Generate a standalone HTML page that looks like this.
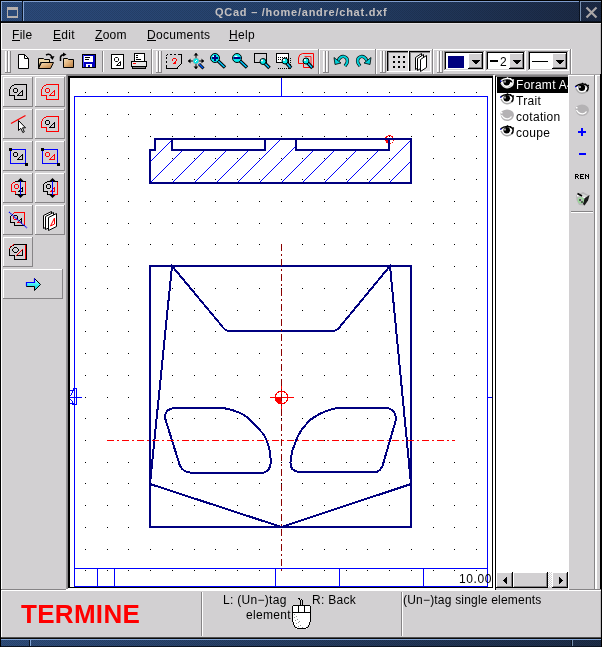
<!DOCTYPE html>
<html><head><meta charset="utf-8">
<style>
html,body{margin:0;padding:0;width:602px;height:647px;overflow:hidden;background:#d2d0d2;}
body{position:relative;font-family:"Liberation Sans",sans-serif;}
svg{position:absolute;left:0;top:0;}
.t{position:absolute;white-space:nowrap;line-height:12px;font-size:12px;color:#000;letter-spacing:0.3px;will-change:transform;}
.m{top:29px;}
.u{position:absolute;height:1px;background:#000;}
</style></head><body>
<svg width="602" height="647" viewBox="0 0 602 647" shape-rendering="crispEdges">
<rect x="0" y="0" width="602" height="647" fill="#d2d0d2" />
<rect x="0" y="0" width="602" height="1" fill="#000000" />
<rect x="0" y="0" width="1" height="647" fill="#000000" />
<rect x="601" y="0" width="1" height="647" fill="#000000" />
<defs><linearGradient id="tg" x1="0" x2="1" y1="0" y2="0"><stop offset="0" stop-color="#2c4b7c"/><stop offset="0.5" stop-color="#25416b"/><stop offset="1" stop-color="#1b2944"/></linearGradient><pattern id="dith" width="2" height="2" patternUnits="userSpaceOnUse"><rect width="1" height="1" fill="#000" fill-opacity="0.12"/><rect x="1" y="1" width="1" height="1" fill="#000" fill-opacity="0.12"/></pattern><linearGradient id="tbg" x1="0" x2="1" y1="0" y2="0"><stop offset="0" stop-color="#2e4d7c"/><stop offset="1" stop-color="#1d2d48"/></linearGradient></defs>
<rect x="1" y="1" width="600" height="21" fill="url(#tg)" />
<rect x="1" y="1" width="600" height="21" fill="url(#dith)" />
<rect x="1" y="1" width="21" height="1" fill="#86a6d6" />
<rect x="1" y="1" width="1" height="20" fill="#86a6d6" />
<rect x="22" y="1" width="1" height="21" fill="#0c1626" />
<rect x="23" y="2" width="1" height="19" fill="#86a6d6" />
<rect x="23" y="1" width="556" height="1" fill="#7e9ccc" />
<rect x="579" y="1" width="1" height="21" fill="#0a1220" />
<rect x="580" y="2" width="1" height="19" fill="#7890b0" />
<rect x="580" y="1" width="21" height="1" fill="#7890b0" />
<rect x="1" y="21" width="600" height="1" fill="#0a1220" />
<rect x="1" y="22" width="600" height="1" fill="#0a0a0a" />
<rect x="7" y="7" width="11" height="11" fill="#b4aeac" />
<rect x="8" y="10" width="9" height="6" fill="#2c4a78" />
<path d="M586.5 7.5 L596.5 17.5 M596.5 7.5 L586.5 17.5" stroke="#aaa6a6" stroke-width="2.2" shape-rendering="auto"/>
<rect x="1" y="23" width="600" height="1" fill="#e4e2e4" />
<rect x="1" y="23" width="1" height="26" fill="#ffffff" />
<rect x="1" y="49" width="571" height="1" fill="#ffffff" />
<rect x="1" y="74" width="600" height="1" fill="#a4a2a4" />
<rect x="5" y="51" width="1" height="22" fill="#ffffff" />
<rect x="6" y="51" width="1" height="22" fill="#e6e4e6" />
<rect x="7" y="51" width="1" height="22" fill="#868486" />
<rect x="8" y="51" width="1" height="22" fill="#ffffff" />
<rect x="9" y="51" width="1" height="22" fill="#e6e4e6" />
<rect x="10" y="51" width="1" height="22" fill="#868486" />
<rect x="5" y="72" width="3" height="1" fill="#868486" />
<rect x="8" y="72" width="3" height="1" fill="#868486" />
<rect x="102" y="51" width="1" height="21" fill="#868486" />
<rect x="103" y="51" width="1" height="21" fill="#ffffff" />
<rect x="151" y="49" width="1" height="25" fill="#868486" />
<rect x="152" y="49" width="1" height="25" fill="#ffffff" />
<rect x="156" y="51" width="1" height="22" fill="#ffffff" />
<rect x="157" y="51" width="1" height="22" fill="#e6e4e6" />
<rect x="158" y="51" width="1" height="22" fill="#868486" />
<rect x="159" y="51" width="1" height="22" fill="#ffffff" />
<rect x="160" y="51" width="1" height="22" fill="#e6e4e6" />
<rect x="161" y="51" width="1" height="22" fill="#868486" />
<rect x="156" y="72" width="3" height="1" fill="#868486" />
<rect x="159" y="72" width="3" height="1" fill="#868486" />
<rect x="318" y="49" width="1" height="25" fill="#868486" />
<rect x="319" y="49" width="1" height="25" fill="#ffffff" />
<rect x="323" y="51" width="1" height="22" fill="#ffffff" />
<rect x="324" y="51" width="1" height="22" fill="#e6e4e6" />
<rect x="325" y="51" width="1" height="22" fill="#868486" />
<rect x="326" y="51" width="1" height="22" fill="#ffffff" />
<rect x="327" y="51" width="1" height="22" fill="#e6e4e6" />
<rect x="328" y="51" width="1" height="22" fill="#868486" />
<rect x="323" y="72" width="3" height="1" fill="#868486" />
<rect x="326" y="72" width="3" height="1" fill="#868486" />
<rect x="375" y="49" width="1" height="25" fill="#868486" />
<rect x="376" y="49" width="1" height="25" fill="#ffffff" />
<rect x="380" y="51" width="1" height="22" fill="#ffffff" />
<rect x="381" y="51" width="1" height="22" fill="#e6e4e6" />
<rect x="382" y="51" width="1" height="22" fill="#868486" />
<rect x="383" y="51" width="1" height="22" fill="#ffffff" />
<rect x="384" y="51" width="1" height="22" fill="#e6e4e6" />
<rect x="385" y="51" width="1" height="22" fill="#868486" />
<rect x="380" y="72" width="3" height="1" fill="#868486" />
<rect x="383" y="72" width="3" height="1" fill="#868486" />
<rect x="432" y="49" width="1" height="25" fill="#868486" />
<rect x="433" y="49" width="1" height="25" fill="#ffffff" />
<rect x="437" y="51" width="1" height="22" fill="#ffffff" />
<rect x="438" y="51" width="1" height="22" fill="#e6e4e6" />
<rect x="439" y="51" width="1" height="22" fill="#868486" />
<rect x="440" y="51" width="1" height="22" fill="#ffffff" />
<rect x="441" y="51" width="1" height="22" fill="#e6e4e6" />
<rect x="442" y="51" width="1" height="22" fill="#868486" />
<rect x="437" y="72" width="3" height="1" fill="#868486" />
<rect x="440" y="72" width="3" height="1" fill="#868486" />
<rect x="570" y="49" width="1" height="25" fill="#868486" />
<rect x="571" y="49" width="1" height="25" fill="#ffffff" />
<defs><pattern id="chk" width="2" height="2" patternUnits="userSpaceOnUse"><rect width="1" height="1" fill="#ffffff"/><rect x="1" y="1" width="1" height="1" fill="#ffffff"/></pattern></defs>
<rect x="388" y="52" width="20" height="19" fill="#dedcde" />
<rect x="387" y="51" width="22" height="1" fill="#000000" />
<rect x="387" y="51" width="1" height="21" fill="#000000" />
<rect x="388" y="52" width="20" height="1" fill="#868486" />
<rect x="388" y="52" width="1" height="19" fill="#868486" />
<rect x="387" y="71" width="22" height="1" fill="#ffffff" />
<rect x="408" y="51" width="1" height="21" fill="#ffffff" />
<rect x="410" y="52" width="20" height="19" fill="#dedcde" />
<rect x="409" y="51" width="22" height="1" fill="#000000" />
<rect x="409" y="51" width="1" height="21" fill="#000000" />
<rect x="410" y="52" width="20" height="1" fill="#868486" />
<rect x="410" y="52" width="1" height="19" fill="#868486" />
<rect x="409" y="71" width="22" height="1" fill="#ffffff" />
<rect x="430" y="51" width="1" height="21" fill="#ffffff" />
<rect x="393" y="56" width="2" height="2" fill="#000000" />
<rect x="393" y="61" width="2" height="2" fill="#000000" />
<rect x="393" y="66" width="2" height="2" fill="#000000" />
<rect x="398" y="56" width="2" height="2" fill="#000000" />
<rect x="398" y="61" width="2" height="2" fill="#000000" />
<rect x="398" y="66" width="2" height="2" fill="#000000" />
<rect x="403" y="56" width="2" height="2" fill="#000000" />
<rect x="403" y="61" width="2" height="2" fill="#000000" />
<rect x="403" y="66" width="2" height="2" fill="#000000" />
<rect x="444" y="51" width="41" height="1" fill="#868486" />
<rect x="444" y="51" width="1" height="20" fill="#868486" />
<rect x="445" y="52" width="39" height="1" fill="#000000" />
<rect x="445" y="52" width="1" height="18" fill="#000000" />
<rect x="444" y="70" width="41" height="1" fill="#ffffff" />
<rect x="484" y="51" width="1" height="20" fill="#ffffff" />
<rect x="445" y="69" width="39" height="1" fill="#d2d0d2" />
<rect x="483" y="52" width="1" height="18" fill="#d2d0d2" />
<rect x="446" y="53" width="37" height="16" fill="#ffffff" />
<rect x="468" y="53" width="15" height="16" fill="#d2d0d2" />
<rect x="468" y="53" width="15" height="1" fill="#ffffff" />
<rect x="468" y="53" width="1" height="16" fill="#ffffff" />
<rect x="468" y="68" width="15" height="1" fill="#000000" />
<rect x="482" y="53" width="1" height="16" fill="#000000" />
<rect x="469" y="67" width="13" height="1" fill="#868486" />
<rect x="481" y="54" width="1" height="14" fill="#868486" />
<path d="M471 60 H480 L475.5 64.5 Z" fill="#000"/>
<rect x="448" y="56" width="16" height="12" fill="#000080" />
<rect x="486" y="51" width="40" height="1" fill="#868486" />
<rect x="486" y="51" width="1" height="20" fill="#868486" />
<rect x="487" y="52" width="38" height="1" fill="#000000" />
<rect x="487" y="52" width="1" height="18" fill="#000000" />
<rect x="486" y="70" width="40" height="1" fill="#ffffff" />
<rect x="525" y="51" width="1" height="20" fill="#ffffff" />
<rect x="487" y="69" width="38" height="1" fill="#d2d0d2" />
<rect x="524" y="52" width="1" height="18" fill="#d2d0d2" />
<rect x="488" y="53" width="36" height="16" fill="#ffffff" />
<rect x="509" y="53" width="15" height="16" fill="#d2d0d2" />
<rect x="509" y="53" width="15" height="1" fill="#ffffff" />
<rect x="509" y="53" width="1" height="16" fill="#ffffff" />
<rect x="509" y="68" width="15" height="1" fill="#000000" />
<rect x="523" y="53" width="1" height="16" fill="#000000" />
<rect x="510" y="67" width="13" height="1" fill="#868486" />
<rect x="522" y="54" width="1" height="14" fill="#868486" />
<path d="M512 60 H521 L516.5 64.5 Z" fill="#000"/>
<rect x="490" y="60" width="8" height="2" fill="#000000" />
<rect x="528" y="51" width="41" height="1" fill="#868486" />
<rect x="528" y="51" width="1" height="20" fill="#868486" />
<rect x="529" y="52" width="39" height="1" fill="#000000" />
<rect x="529" y="52" width="1" height="18" fill="#000000" />
<rect x="528" y="70" width="41" height="1" fill="#ffffff" />
<rect x="568" y="51" width="1" height="20" fill="#ffffff" />
<rect x="529" y="69" width="39" height="1" fill="#d2d0d2" />
<rect x="567" y="52" width="1" height="18" fill="#d2d0d2" />
<rect x="530" y="53" width="37" height="16" fill="#ffffff" />
<rect x="552" y="53" width="15" height="16" fill="#d2d0d2" />
<rect x="552" y="53" width="15" height="1" fill="#ffffff" />
<rect x="552" y="53" width="1" height="16" fill="#ffffff" />
<rect x="552" y="68" width="15" height="1" fill="#000000" />
<rect x="566" y="53" width="1" height="16" fill="#000000" />
<rect x="553" y="67" width="13" height="1" fill="#868486" />
<rect x="565" y="54" width="1" height="14" fill="#868486" />
<path d="M555 60 H564 L559.5 64.5 Z" fill="#000"/>
<rect x="532" y="61" width="16" height="1" fill="#000000" />
<rect x="1" y="75" width="65" height="1" fill="#ffffff" />
<rect x="1" y="75" width="1" height="515" fill="#ffffff" />
<rect x="1" y="589" width="65" height="1" fill="#868486" />
<rect x="3" y="77" width="30" height="1" fill="#ffffff" />
<rect x="3" y="77" width="1" height="30" fill="#ffffff" />
<rect x="3" y="106" width="30" height="1" fill="#868486" />
<rect x="32" y="77" width="1" height="30" fill="#868486" />
<rect x="35" y="77" width="30" height="1" fill="#ffffff" />
<rect x="35" y="77" width="1" height="30" fill="#ffffff" />
<rect x="35" y="106" width="30" height="1" fill="#868486" />
<rect x="64" y="77" width="1" height="30" fill="#868486" />
<rect x="3" y="109" width="30" height="1" fill="#ffffff" />
<rect x="3" y="109" width="1" height="30" fill="#ffffff" />
<rect x="3" y="138" width="30" height="1" fill="#868486" />
<rect x="32" y="109" width="1" height="30" fill="#868486" />
<rect x="35" y="109" width="30" height="1" fill="#ffffff" />
<rect x="35" y="109" width="1" height="30" fill="#ffffff" />
<rect x="35" y="138" width="30" height="1" fill="#868486" />
<rect x="64" y="109" width="1" height="30" fill="#868486" />
<rect x="3" y="141" width="30" height="1" fill="#ffffff" />
<rect x="3" y="141" width="1" height="30" fill="#ffffff" />
<rect x="3" y="170" width="30" height="1" fill="#868486" />
<rect x="32" y="141" width="1" height="30" fill="#868486" />
<rect x="35" y="141" width="30" height="1" fill="#ffffff" />
<rect x="35" y="141" width="1" height="30" fill="#ffffff" />
<rect x="35" y="170" width="30" height="1" fill="#868486" />
<rect x="64" y="141" width="1" height="30" fill="#868486" />
<rect x="3" y="173" width="30" height="1" fill="#ffffff" />
<rect x="3" y="173" width="1" height="30" fill="#ffffff" />
<rect x="3" y="202" width="30" height="1" fill="#868486" />
<rect x="32" y="173" width="1" height="30" fill="#868486" />
<rect x="35" y="173" width="30" height="1" fill="#ffffff" />
<rect x="35" y="173" width="1" height="30" fill="#ffffff" />
<rect x="35" y="202" width="30" height="1" fill="#868486" />
<rect x="64" y="173" width="1" height="30" fill="#868486" />
<rect x="3" y="205" width="30" height="1" fill="#ffffff" />
<rect x="3" y="205" width="1" height="30" fill="#ffffff" />
<rect x="3" y="234" width="30" height="1" fill="#868486" />
<rect x="32" y="205" width="1" height="30" fill="#868486" />
<rect x="35" y="205" width="30" height="1" fill="#ffffff" />
<rect x="35" y="205" width="1" height="30" fill="#ffffff" />
<rect x="35" y="234" width="30" height="1" fill="#868486" />
<rect x="64" y="205" width="1" height="30" fill="#868486" />
<rect x="3" y="237" width="30" height="1" fill="#ffffff" />
<rect x="3" y="237" width="1" height="30" fill="#ffffff" />
<rect x="3" y="266" width="30" height="1" fill="#868486" />
<rect x="32" y="237" width="1" height="30" fill="#868486" />
<rect x="3" y="269" width="60" height="1" fill="#ffffff" />
<rect x="3" y="269" width="1" height="30" fill="#ffffff" />
<rect x="3" y="298" width="60" height="1" fill="#868486" />
<rect x="62" y="269" width="1" height="30" fill="#868486" />
<rect x="70" y="78" width="422" height="509" fill="#ffffff" />
<rect x="66" y="74" width="428" height="1" fill="#868486" />
<rect x="66" y="74" width="1" height="516" fill="#969496" />
<rect x="67" y="75" width="427" height="1" fill="#868486" />
<rect x="67" y="75" width="1" height="515" fill="#868486" />
<rect x="68" y="76" width="425" height="1" fill="#000000" />
<rect x="68" y="76" width="1" height="513" fill="#000000" />
<rect x="68" y="77" width="425" height="1" fill="#000000" />
<rect x="69" y="76" width="1" height="513" fill="#000000" />
<rect x="492" y="76" width="1" height="512" fill="#000000" />
<rect x="68" y="587" width="425" height="1" fill="#000000" />
<rect x="493" y="75" width="1" height="515" fill="#ffffff" />
<rect x="494" y="75" width="1" height="515" fill="#ffffff" />
<rect x="68" y="588" width="427" height="1" fill="#ffffff" />
<rect x="66" y="589" width="429" height="1" fill="#ffffff" />
<rect x="495" y="75" width="1" height="515" fill="#000000" />
<rect x="495" y="75" width="74" height="1" fill="#868486" />
<rect x="496" y="76" width="72" height="1" fill="#7a787a" />
<rect x="496" y="77" width="72" height="495" fill="#ffffff" />
<rect x="497" y="77" width="71" height="16" fill="#000000" />
<rect x="496" y="572" width="73" height="16" fill="#d2d0d2" />
<rect x="496" y="572" width="17" height="1" fill="#ffffff" />
<rect x="496" y="572" width="1" height="16" fill="#ffffff" />
<rect x="496" y="587" width="17" height="1" fill="#000000" />
<rect x="512" y="572" width="1" height="16" fill="#000000" />
<rect x="497" y="586" width="15" height="1" fill="#868486" />
<rect x="511" y="573" width="1" height="14" fill="#868486" />
<rect x="513" y="572" width="35" height="1" fill="#ffffff" />
<rect x="513" y="572" width="1" height="16" fill="#ffffff" />
<rect x="513" y="587" width="35" height="1" fill="#000000" />
<rect x="547" y="572" width="1" height="16" fill="#000000" />
<rect x="514" y="586" width="33" height="1" fill="#868486" />
<rect x="546" y="573" width="1" height="14" fill="#868486" />
<rect x="552" y="572" width="16" height="1" fill="#ffffff" />
<rect x="552" y="572" width="1" height="16" fill="#ffffff" />
<rect x="552" y="587" width="16" height="1" fill="#000000" />
<rect x="567" y="572" width="1" height="16" fill="#000000" />
<rect x="553" y="586" width="14" height="1" fill="#868486" />
<rect x="566" y="573" width="1" height="14" fill="#868486" />
<rect x="548" y="572" width="4" height="15" fill="url(#chk)" />
<path d="M503 580.5 L507 576.5 V584.5 Z" fill="#000"/>
<path d="M563 580.5 L559 576.5 V584.5 Z" fill="#000"/>
<rect x="568" y="75" width="32" height="1" fill="#ffffff" />
<rect x="568" y="75" width="1" height="515" fill="#ffffff" />
<rect x="594" y="75" width="1" height="515" fill="#868486" />
<rect x="595" y="75" width="1" height="515" fill="#ffffff" />
<rect x="596" y="75" width="1" height="515" fill="#ffffff" />
<rect x="600" y="24" width="1" height="613" fill="#b8b6b8" />
<rect x="600" y="74" width="1" height="516" fill="#000000" />
<rect x="569" y="589" width="32" height="1" fill="#868486" />
<rect x="571" y="211" width="22" height="1" fill="#868486" />
<rect x="571" y="212" width="22" height="1" fill="#ffffff" />
<rect x="1" y="590" width="600" height="1" fill="#ffffff" />
<rect x="1" y="590" width="1" height="47" fill="#ffffff" />
<rect x="1" y="637" width="600" height="1" fill="#505050" />
<rect x="201" y="592" width="1" height="44" fill="#868486" />
<rect x="202" y="592" width="1" height="44" fill="#ffffff" />
<rect x="401" y="592" width="1" height="44" fill="#868486" />
<rect x="402" y="592" width="1" height="44" fill="#ffffff" />
<rect x="1" y="638" width="600" height="9" fill="url(#tbg)" />
<rect x="1" y="638" width="600" height="9" fill="url(#dith)" />
<rect x="1" y="638" width="600" height="1" fill="#0a0a0a" />
<rect x="1" y="639" width="600" height="1" fill="#84a6d6" />
<rect x="29" y="640" width="1" height="7" fill="#0a1220" />
<rect x="30" y="640" width="1" height="7" fill="#84a6d6" />
<rect x="571" y="640" width="1" height="7" fill="#0a1220" />
<rect x="572" y="640" width="1" height="7" fill="#7890b0" />
<rect x="1" y="646" width="600" height="1" fill="#0a1220" />
</svg>
<svg width="602" height="647" viewBox="0 0 602 647" shape-rendering="crispEdges">
<defs><clipPath id="cv"><rect x="70" y="78" width="422" height="509"/></clipPath></defs>
<g clip-path="url(#cv)">
<rect x="85" y="92" width="1" height="1" fill="#000" />
<rect x="85" y="114" width="1" height="1" fill="#000" />
<rect x="85" y="136" width="1" height="1" fill="#000" />
<rect x="85" y="158" width="1" height="1" fill="#000" />
<rect x="85" y="179" width="1" height="1" fill="#000" />
<rect x="85" y="201" width="1" height="1" fill="#000" />
<rect x="85" y="223" width="1" height="1" fill="#000" />
<rect x="85" y="244" width="1" height="1" fill="#000" />
<rect x="85" y="266" width="1" height="1" fill="#000" />
<rect x="85" y="288" width="1" height="1" fill="#000" />
<rect x="85" y="310" width="1" height="1" fill="#000" />
<rect x="85" y="331" width="1" height="1" fill="#000" />
<rect x="85" y="353" width="1" height="1" fill="#000" />
<rect x="85" y="375" width="1" height="1" fill="#000" />
<rect x="85" y="397" width="1" height="1" fill="#000" />
<rect x="85" y="418" width="1" height="1" fill="#000" />
<rect x="85" y="440" width="1" height="1" fill="#000" />
<rect x="85" y="462" width="1" height="1" fill="#000" />
<rect x="85" y="483" width="1" height="1" fill="#000" />
<rect x="85" y="505" width="1" height="1" fill="#000" />
<rect x="85" y="527" width="1" height="1" fill="#000" />
<rect x="85" y="549" width="1" height="1" fill="#000" />
<rect x="85" y="570" width="1" height="1" fill="#000" />
<rect x="107" y="92" width="1" height="1" fill="#000" />
<rect x="107" y="114" width="1" height="1" fill="#000" />
<rect x="107" y="136" width="1" height="1" fill="#000" />
<rect x="107" y="158" width="1" height="1" fill="#000" />
<rect x="107" y="179" width="1" height="1" fill="#000" />
<rect x="107" y="201" width="1" height="1" fill="#000" />
<rect x="107" y="223" width="1" height="1" fill="#000" />
<rect x="107" y="244" width="1" height="1" fill="#000" />
<rect x="107" y="266" width="1" height="1" fill="#000" />
<rect x="107" y="288" width="1" height="1" fill="#000" />
<rect x="107" y="310" width="1" height="1" fill="#000" />
<rect x="107" y="331" width="1" height="1" fill="#000" />
<rect x="107" y="353" width="1" height="1" fill="#000" />
<rect x="107" y="375" width="1" height="1" fill="#000" />
<rect x="107" y="397" width="1" height="1" fill="#000" />
<rect x="107" y="418" width="1" height="1" fill="#000" />
<rect x="107" y="440" width="1" height="1" fill="#000" />
<rect x="107" y="462" width="1" height="1" fill="#000" />
<rect x="107" y="483" width="1" height="1" fill="#000" />
<rect x="107" y="505" width="1" height="1" fill="#000" />
<rect x="107" y="527" width="1" height="1" fill="#000" />
<rect x="107" y="549" width="1" height="1" fill="#000" />
<rect x="107" y="570" width="1" height="1" fill="#000" />
<rect x="128" y="92" width="1" height="1" fill="#000" />
<rect x="128" y="114" width="1" height="1" fill="#000" />
<rect x="128" y="136" width="1" height="1" fill="#000" />
<rect x="128" y="158" width="1" height="1" fill="#000" />
<rect x="128" y="179" width="1" height="1" fill="#000" />
<rect x="128" y="201" width="1" height="1" fill="#000" />
<rect x="128" y="223" width="1" height="1" fill="#000" />
<rect x="128" y="244" width="1" height="1" fill="#000" />
<rect x="128" y="266" width="1" height="1" fill="#000" />
<rect x="128" y="288" width="1" height="1" fill="#000" />
<rect x="128" y="310" width="1" height="1" fill="#000" />
<rect x="128" y="331" width="1" height="1" fill="#000" />
<rect x="128" y="353" width="1" height="1" fill="#000" />
<rect x="128" y="375" width="1" height="1" fill="#000" />
<rect x="128" y="397" width="1" height="1" fill="#000" />
<rect x="128" y="418" width="1" height="1" fill="#000" />
<rect x="128" y="440" width="1" height="1" fill="#000" />
<rect x="128" y="462" width="1" height="1" fill="#000" />
<rect x="128" y="483" width="1" height="1" fill="#000" />
<rect x="128" y="505" width="1" height="1" fill="#000" />
<rect x="128" y="527" width="1" height="1" fill="#000" />
<rect x="128" y="549" width="1" height="1" fill="#000" />
<rect x="128" y="570" width="1" height="1" fill="#000" />
<rect x="150" y="92" width="1" height="1" fill="#000" />
<rect x="150" y="114" width="1" height="1" fill="#000" />
<rect x="150" y="136" width="1" height="1" fill="#000" />
<rect x="150" y="158" width="1" height="1" fill="#000" />
<rect x="150" y="179" width="1" height="1" fill="#000" />
<rect x="150" y="201" width="1" height="1" fill="#000" />
<rect x="150" y="223" width="1" height="1" fill="#000" />
<rect x="150" y="244" width="1" height="1" fill="#000" />
<rect x="150" y="266" width="1" height="1" fill="#000" />
<rect x="150" y="288" width="1" height="1" fill="#000" />
<rect x="150" y="310" width="1" height="1" fill="#000" />
<rect x="150" y="331" width="1" height="1" fill="#000" />
<rect x="150" y="353" width="1" height="1" fill="#000" />
<rect x="150" y="375" width="1" height="1" fill="#000" />
<rect x="150" y="397" width="1" height="1" fill="#000" />
<rect x="150" y="418" width="1" height="1" fill="#000" />
<rect x="150" y="440" width="1" height="1" fill="#000" />
<rect x="150" y="462" width="1" height="1" fill="#000" />
<rect x="150" y="483" width="1" height="1" fill="#000" />
<rect x="150" y="505" width="1" height="1" fill="#000" />
<rect x="150" y="527" width="1" height="1" fill="#000" />
<rect x="150" y="549" width="1" height="1" fill="#000" />
<rect x="150" y="570" width="1" height="1" fill="#000" />
<rect x="172" y="92" width="1" height="1" fill="#000" />
<rect x="172" y="114" width="1" height="1" fill="#000" />
<rect x="172" y="136" width="1" height="1" fill="#000" />
<rect x="172" y="158" width="1" height="1" fill="#000" />
<rect x="172" y="179" width="1" height="1" fill="#000" />
<rect x="172" y="201" width="1" height="1" fill="#000" />
<rect x="172" y="223" width="1" height="1" fill="#000" />
<rect x="172" y="244" width="1" height="1" fill="#000" />
<rect x="172" y="266" width="1" height="1" fill="#000" />
<rect x="172" y="288" width="1" height="1" fill="#000" />
<rect x="172" y="310" width="1" height="1" fill="#000" />
<rect x="172" y="331" width="1" height="1" fill="#000" />
<rect x="172" y="353" width="1" height="1" fill="#000" />
<rect x="172" y="375" width="1" height="1" fill="#000" />
<rect x="172" y="397" width="1" height="1" fill="#000" />
<rect x="172" y="418" width="1" height="1" fill="#000" />
<rect x="172" y="440" width="1" height="1" fill="#000" />
<rect x="172" y="462" width="1" height="1" fill="#000" />
<rect x="172" y="483" width="1" height="1" fill="#000" />
<rect x="172" y="505" width="1" height="1" fill="#000" />
<rect x="172" y="527" width="1" height="1" fill="#000" />
<rect x="172" y="549" width="1" height="1" fill="#000" />
<rect x="172" y="570" width="1" height="1" fill="#000" />
<rect x="194" y="92" width="1" height="1" fill="#000" />
<rect x="194" y="114" width="1" height="1" fill="#000" />
<rect x="194" y="136" width="1" height="1" fill="#000" />
<rect x="194" y="158" width="1" height="1" fill="#000" />
<rect x="194" y="179" width="1" height="1" fill="#000" />
<rect x="194" y="201" width="1" height="1" fill="#000" />
<rect x="194" y="223" width="1" height="1" fill="#000" />
<rect x="194" y="244" width="1" height="1" fill="#000" />
<rect x="194" y="266" width="1" height="1" fill="#000" />
<rect x="194" y="288" width="1" height="1" fill="#000" />
<rect x="194" y="310" width="1" height="1" fill="#000" />
<rect x="194" y="331" width="1" height="1" fill="#000" />
<rect x="194" y="353" width="1" height="1" fill="#000" />
<rect x="194" y="375" width="1" height="1" fill="#000" />
<rect x="194" y="397" width="1" height="1" fill="#000" />
<rect x="194" y="418" width="1" height="1" fill="#000" />
<rect x="194" y="440" width="1" height="1" fill="#000" />
<rect x="194" y="462" width="1" height="1" fill="#000" />
<rect x="194" y="483" width="1" height="1" fill="#000" />
<rect x="194" y="505" width="1" height="1" fill="#000" />
<rect x="194" y="527" width="1" height="1" fill="#000" />
<rect x="194" y="549" width="1" height="1" fill="#000" />
<rect x="194" y="570" width="1" height="1" fill="#000" />
<rect x="215" y="92" width="1" height="1" fill="#000" />
<rect x="215" y="114" width="1" height="1" fill="#000" />
<rect x="215" y="136" width="1" height="1" fill="#000" />
<rect x="215" y="158" width="1" height="1" fill="#000" />
<rect x="215" y="179" width="1" height="1" fill="#000" />
<rect x="215" y="201" width="1" height="1" fill="#000" />
<rect x="215" y="223" width="1" height="1" fill="#000" />
<rect x="215" y="244" width="1" height="1" fill="#000" />
<rect x="215" y="266" width="1" height="1" fill="#000" />
<rect x="215" y="288" width="1" height="1" fill="#000" />
<rect x="215" y="310" width="1" height="1" fill="#000" />
<rect x="215" y="331" width="1" height="1" fill="#000" />
<rect x="215" y="353" width="1" height="1" fill="#000" />
<rect x="215" y="375" width="1" height="1" fill="#000" />
<rect x="215" y="397" width="1" height="1" fill="#000" />
<rect x="215" y="418" width="1" height="1" fill="#000" />
<rect x="215" y="440" width="1" height="1" fill="#000" />
<rect x="215" y="462" width="1" height="1" fill="#000" />
<rect x="215" y="483" width="1" height="1" fill="#000" />
<rect x="215" y="505" width="1" height="1" fill="#000" />
<rect x="215" y="527" width="1" height="1" fill="#000" />
<rect x="215" y="549" width="1" height="1" fill="#000" />
<rect x="215" y="570" width="1" height="1" fill="#000" />
<rect x="237" y="92" width="1" height="1" fill="#000" />
<rect x="237" y="114" width="1" height="1" fill="#000" />
<rect x="237" y="136" width="1" height="1" fill="#000" />
<rect x="237" y="158" width="1" height="1" fill="#000" />
<rect x="237" y="179" width="1" height="1" fill="#000" />
<rect x="237" y="201" width="1" height="1" fill="#000" />
<rect x="237" y="223" width="1" height="1" fill="#000" />
<rect x="237" y="244" width="1" height="1" fill="#000" />
<rect x="237" y="266" width="1" height="1" fill="#000" />
<rect x="237" y="288" width="1" height="1" fill="#000" />
<rect x="237" y="310" width="1" height="1" fill="#000" />
<rect x="237" y="331" width="1" height="1" fill="#000" />
<rect x="237" y="353" width="1" height="1" fill="#000" />
<rect x="237" y="375" width="1" height="1" fill="#000" />
<rect x="237" y="397" width="1" height="1" fill="#000" />
<rect x="237" y="418" width="1" height="1" fill="#000" />
<rect x="237" y="440" width="1" height="1" fill="#000" />
<rect x="237" y="462" width="1" height="1" fill="#000" />
<rect x="237" y="483" width="1" height="1" fill="#000" />
<rect x="237" y="505" width="1" height="1" fill="#000" />
<rect x="237" y="527" width="1" height="1" fill="#000" />
<rect x="237" y="549" width="1" height="1" fill="#000" />
<rect x="237" y="570" width="1" height="1" fill="#000" />
<rect x="259" y="92" width="1" height="1" fill="#000" />
<rect x="259" y="114" width="1" height="1" fill="#000" />
<rect x="259" y="136" width="1" height="1" fill="#000" />
<rect x="259" y="158" width="1" height="1" fill="#000" />
<rect x="259" y="179" width="1" height="1" fill="#000" />
<rect x="259" y="201" width="1" height="1" fill="#000" />
<rect x="259" y="223" width="1" height="1" fill="#000" />
<rect x="259" y="244" width="1" height="1" fill="#000" />
<rect x="259" y="266" width="1" height="1" fill="#000" />
<rect x="259" y="288" width="1" height="1" fill="#000" />
<rect x="259" y="310" width="1" height="1" fill="#000" />
<rect x="259" y="331" width="1" height="1" fill="#000" />
<rect x="259" y="353" width="1" height="1" fill="#000" />
<rect x="259" y="375" width="1" height="1" fill="#000" />
<rect x="259" y="397" width="1" height="1" fill="#000" />
<rect x="259" y="418" width="1" height="1" fill="#000" />
<rect x="259" y="440" width="1" height="1" fill="#000" />
<rect x="259" y="462" width="1" height="1" fill="#000" />
<rect x="259" y="483" width="1" height="1" fill="#000" />
<rect x="259" y="505" width="1" height="1" fill="#000" />
<rect x="259" y="527" width="1" height="1" fill="#000" />
<rect x="259" y="549" width="1" height="1" fill="#000" />
<rect x="259" y="570" width="1" height="1" fill="#000" />
<rect x="281" y="92" width="1" height="1" fill="#000" />
<rect x="281" y="114" width="1" height="1" fill="#000" />
<rect x="281" y="136" width="1" height="1" fill="#000" />
<rect x="281" y="158" width="1" height="1" fill="#000" />
<rect x="281" y="179" width="1" height="1" fill="#000" />
<rect x="281" y="201" width="1" height="1" fill="#000" />
<rect x="281" y="223" width="1" height="1" fill="#000" />
<rect x="281" y="244" width="1" height="1" fill="#000" />
<rect x="281" y="266" width="1" height="1" fill="#000" />
<rect x="281" y="288" width="1" height="1" fill="#000" />
<rect x="281" y="310" width="1" height="1" fill="#000" />
<rect x="281" y="331" width="1" height="1" fill="#000" />
<rect x="281" y="353" width="1" height="1" fill="#000" />
<rect x="281" y="375" width="1" height="1" fill="#000" />
<rect x="281" y="397" width="1" height="1" fill="#000" />
<rect x="281" y="418" width="1" height="1" fill="#000" />
<rect x="281" y="440" width="1" height="1" fill="#000" />
<rect x="281" y="462" width="1" height="1" fill="#000" />
<rect x="281" y="483" width="1" height="1" fill="#000" />
<rect x="281" y="505" width="1" height="1" fill="#000" />
<rect x="281" y="527" width="1" height="1" fill="#000" />
<rect x="281" y="549" width="1" height="1" fill="#000" />
<rect x="281" y="570" width="1" height="1" fill="#000" />
<rect x="302" y="92" width="1" height="1" fill="#000" />
<rect x="302" y="114" width="1" height="1" fill="#000" />
<rect x="302" y="136" width="1" height="1" fill="#000" />
<rect x="302" y="158" width="1" height="1" fill="#000" />
<rect x="302" y="179" width="1" height="1" fill="#000" />
<rect x="302" y="201" width="1" height="1" fill="#000" />
<rect x="302" y="223" width="1" height="1" fill="#000" />
<rect x="302" y="244" width="1" height="1" fill="#000" />
<rect x="302" y="266" width="1" height="1" fill="#000" />
<rect x="302" y="288" width="1" height="1" fill="#000" />
<rect x="302" y="310" width="1" height="1" fill="#000" />
<rect x="302" y="331" width="1" height="1" fill="#000" />
<rect x="302" y="353" width="1" height="1" fill="#000" />
<rect x="302" y="375" width="1" height="1" fill="#000" />
<rect x="302" y="397" width="1" height="1" fill="#000" />
<rect x="302" y="418" width="1" height="1" fill="#000" />
<rect x="302" y="440" width="1" height="1" fill="#000" />
<rect x="302" y="462" width="1" height="1" fill="#000" />
<rect x="302" y="483" width="1" height="1" fill="#000" />
<rect x="302" y="505" width="1" height="1" fill="#000" />
<rect x="302" y="527" width="1" height="1" fill="#000" />
<rect x="302" y="549" width="1" height="1" fill="#000" />
<rect x="302" y="570" width="1" height="1" fill="#000" />
<rect x="324" y="92" width="1" height="1" fill="#000" />
<rect x="324" y="114" width="1" height="1" fill="#000" />
<rect x="324" y="136" width="1" height="1" fill="#000" />
<rect x="324" y="158" width="1" height="1" fill="#000" />
<rect x="324" y="179" width="1" height="1" fill="#000" />
<rect x="324" y="201" width="1" height="1" fill="#000" />
<rect x="324" y="223" width="1" height="1" fill="#000" />
<rect x="324" y="244" width="1" height="1" fill="#000" />
<rect x="324" y="266" width="1" height="1" fill="#000" />
<rect x="324" y="288" width="1" height="1" fill="#000" />
<rect x="324" y="310" width="1" height="1" fill="#000" />
<rect x="324" y="331" width="1" height="1" fill="#000" />
<rect x="324" y="353" width="1" height="1" fill="#000" />
<rect x="324" y="375" width="1" height="1" fill="#000" />
<rect x="324" y="397" width="1" height="1" fill="#000" />
<rect x="324" y="418" width="1" height="1" fill="#000" />
<rect x="324" y="440" width="1" height="1" fill="#000" />
<rect x="324" y="462" width="1" height="1" fill="#000" />
<rect x="324" y="483" width="1" height="1" fill="#000" />
<rect x="324" y="505" width="1" height="1" fill="#000" />
<rect x="324" y="527" width="1" height="1" fill="#000" />
<rect x="324" y="549" width="1" height="1" fill="#000" />
<rect x="324" y="570" width="1" height="1" fill="#000" />
<rect x="346" y="92" width="1" height="1" fill="#000" />
<rect x="346" y="114" width="1" height="1" fill="#000" />
<rect x="346" y="136" width="1" height="1" fill="#000" />
<rect x="346" y="158" width="1" height="1" fill="#000" />
<rect x="346" y="179" width="1" height="1" fill="#000" />
<rect x="346" y="201" width="1" height="1" fill="#000" />
<rect x="346" y="223" width="1" height="1" fill="#000" />
<rect x="346" y="244" width="1" height="1" fill="#000" />
<rect x="346" y="266" width="1" height="1" fill="#000" />
<rect x="346" y="288" width="1" height="1" fill="#000" />
<rect x="346" y="310" width="1" height="1" fill="#000" />
<rect x="346" y="331" width="1" height="1" fill="#000" />
<rect x="346" y="353" width="1" height="1" fill="#000" />
<rect x="346" y="375" width="1" height="1" fill="#000" />
<rect x="346" y="397" width="1" height="1" fill="#000" />
<rect x="346" y="418" width="1" height="1" fill="#000" />
<rect x="346" y="440" width="1" height="1" fill="#000" />
<rect x="346" y="462" width="1" height="1" fill="#000" />
<rect x="346" y="483" width="1" height="1" fill="#000" />
<rect x="346" y="505" width="1" height="1" fill="#000" />
<rect x="346" y="527" width="1" height="1" fill="#000" />
<rect x="346" y="549" width="1" height="1" fill="#000" />
<rect x="346" y="570" width="1" height="1" fill="#000" />
<rect x="367" y="92" width="1" height="1" fill="#000" />
<rect x="367" y="114" width="1" height="1" fill="#000" />
<rect x="367" y="136" width="1" height="1" fill="#000" />
<rect x="367" y="158" width="1" height="1" fill="#000" />
<rect x="367" y="179" width="1" height="1" fill="#000" />
<rect x="367" y="201" width="1" height="1" fill="#000" />
<rect x="367" y="223" width="1" height="1" fill="#000" />
<rect x="367" y="244" width="1" height="1" fill="#000" />
<rect x="367" y="266" width="1" height="1" fill="#000" />
<rect x="367" y="288" width="1" height="1" fill="#000" />
<rect x="367" y="310" width="1" height="1" fill="#000" />
<rect x="367" y="331" width="1" height="1" fill="#000" />
<rect x="367" y="353" width="1" height="1" fill="#000" />
<rect x="367" y="375" width="1" height="1" fill="#000" />
<rect x="367" y="397" width="1" height="1" fill="#000" />
<rect x="367" y="418" width="1" height="1" fill="#000" />
<rect x="367" y="440" width="1" height="1" fill="#000" />
<rect x="367" y="462" width="1" height="1" fill="#000" />
<rect x="367" y="483" width="1" height="1" fill="#000" />
<rect x="367" y="505" width="1" height="1" fill="#000" />
<rect x="367" y="527" width="1" height="1" fill="#000" />
<rect x="367" y="549" width="1" height="1" fill="#000" />
<rect x="367" y="570" width="1" height="1" fill="#000" />
<rect x="389" y="92" width="1" height="1" fill="#000" />
<rect x="389" y="114" width="1" height="1" fill="#000" />
<rect x="389" y="136" width="1" height="1" fill="#000" />
<rect x="389" y="158" width="1" height="1" fill="#000" />
<rect x="389" y="179" width="1" height="1" fill="#000" />
<rect x="389" y="201" width="1" height="1" fill="#000" />
<rect x="389" y="223" width="1" height="1" fill="#000" />
<rect x="389" y="244" width="1" height="1" fill="#000" />
<rect x="389" y="266" width="1" height="1" fill="#000" />
<rect x="389" y="288" width="1" height="1" fill="#000" />
<rect x="389" y="310" width="1" height="1" fill="#000" />
<rect x="389" y="331" width="1" height="1" fill="#000" />
<rect x="389" y="353" width="1" height="1" fill="#000" />
<rect x="389" y="375" width="1" height="1" fill="#000" />
<rect x="389" y="397" width="1" height="1" fill="#000" />
<rect x="389" y="418" width="1" height="1" fill="#000" />
<rect x="389" y="440" width="1" height="1" fill="#000" />
<rect x="389" y="462" width="1" height="1" fill="#000" />
<rect x="389" y="483" width="1" height="1" fill="#000" />
<rect x="389" y="505" width="1" height="1" fill="#000" />
<rect x="389" y="527" width="1" height="1" fill="#000" />
<rect x="389" y="549" width="1" height="1" fill="#000" />
<rect x="389" y="570" width="1" height="1" fill="#000" />
<rect x="411" y="92" width="1" height="1" fill="#000" />
<rect x="411" y="114" width="1" height="1" fill="#000" />
<rect x="411" y="136" width="1" height="1" fill="#000" />
<rect x="411" y="158" width="1" height="1" fill="#000" />
<rect x="411" y="179" width="1" height="1" fill="#000" />
<rect x="411" y="201" width="1" height="1" fill="#000" />
<rect x="411" y="223" width="1" height="1" fill="#000" />
<rect x="411" y="244" width="1" height="1" fill="#000" />
<rect x="411" y="266" width="1" height="1" fill="#000" />
<rect x="411" y="288" width="1" height="1" fill="#000" />
<rect x="411" y="310" width="1" height="1" fill="#000" />
<rect x="411" y="331" width="1" height="1" fill="#000" />
<rect x="411" y="353" width="1" height="1" fill="#000" />
<rect x="411" y="375" width="1" height="1" fill="#000" />
<rect x="411" y="397" width="1" height="1" fill="#000" />
<rect x="411" y="418" width="1" height="1" fill="#000" />
<rect x="411" y="440" width="1" height="1" fill="#000" />
<rect x="411" y="462" width="1" height="1" fill="#000" />
<rect x="411" y="483" width="1" height="1" fill="#000" />
<rect x="411" y="505" width="1" height="1" fill="#000" />
<rect x="411" y="527" width="1" height="1" fill="#000" />
<rect x="411" y="549" width="1" height="1" fill="#000" />
<rect x="411" y="570" width="1" height="1" fill="#000" />
<rect x="433" y="92" width="1" height="1" fill="#000" />
<rect x="433" y="114" width="1" height="1" fill="#000" />
<rect x="433" y="136" width="1" height="1" fill="#000" />
<rect x="433" y="158" width="1" height="1" fill="#000" />
<rect x="433" y="179" width="1" height="1" fill="#000" />
<rect x="433" y="201" width="1" height="1" fill="#000" />
<rect x="433" y="223" width="1" height="1" fill="#000" />
<rect x="433" y="244" width="1" height="1" fill="#000" />
<rect x="433" y="266" width="1" height="1" fill="#000" />
<rect x="433" y="288" width="1" height="1" fill="#000" />
<rect x="433" y="310" width="1" height="1" fill="#000" />
<rect x="433" y="331" width="1" height="1" fill="#000" />
<rect x="433" y="353" width="1" height="1" fill="#000" />
<rect x="433" y="375" width="1" height="1" fill="#000" />
<rect x="433" y="397" width="1" height="1" fill="#000" />
<rect x="433" y="418" width="1" height="1" fill="#000" />
<rect x="433" y="440" width="1" height="1" fill="#000" />
<rect x="433" y="462" width="1" height="1" fill="#000" />
<rect x="433" y="483" width="1" height="1" fill="#000" />
<rect x="433" y="505" width="1" height="1" fill="#000" />
<rect x="433" y="527" width="1" height="1" fill="#000" />
<rect x="433" y="549" width="1" height="1" fill="#000" />
<rect x="433" y="570" width="1" height="1" fill="#000" />
<rect x="454" y="92" width="1" height="1" fill="#000" />
<rect x="454" y="114" width="1" height="1" fill="#000" />
<rect x="454" y="136" width="1" height="1" fill="#000" />
<rect x="454" y="158" width="1" height="1" fill="#000" />
<rect x="454" y="179" width="1" height="1" fill="#000" />
<rect x="454" y="201" width="1" height="1" fill="#000" />
<rect x="454" y="223" width="1" height="1" fill="#000" />
<rect x="454" y="244" width="1" height="1" fill="#000" />
<rect x="454" y="266" width="1" height="1" fill="#000" />
<rect x="454" y="288" width="1" height="1" fill="#000" />
<rect x="454" y="310" width="1" height="1" fill="#000" />
<rect x="454" y="331" width="1" height="1" fill="#000" />
<rect x="454" y="353" width="1" height="1" fill="#000" />
<rect x="454" y="375" width="1" height="1" fill="#000" />
<rect x="454" y="397" width="1" height="1" fill="#000" />
<rect x="454" y="418" width="1" height="1" fill="#000" />
<rect x="454" y="440" width="1" height="1" fill="#000" />
<rect x="454" y="462" width="1" height="1" fill="#000" />
<rect x="454" y="483" width="1" height="1" fill="#000" />
<rect x="454" y="505" width="1" height="1" fill="#000" />
<rect x="454" y="527" width="1" height="1" fill="#000" />
<rect x="454" y="549" width="1" height="1" fill="#000" />
<rect x="454" y="570" width="1" height="1" fill="#000" />
<rect x="476" y="92" width="1" height="1" fill="#000" />
<rect x="476" y="114" width="1" height="1" fill="#000" />
<rect x="476" y="136" width="1" height="1" fill="#000" />
<rect x="476" y="158" width="1" height="1" fill="#000" />
<rect x="476" y="179" width="1" height="1" fill="#000" />
<rect x="476" y="201" width="1" height="1" fill="#000" />
<rect x="476" y="223" width="1" height="1" fill="#000" />
<rect x="476" y="244" width="1" height="1" fill="#000" />
<rect x="476" y="266" width="1" height="1" fill="#000" />
<rect x="476" y="288" width="1" height="1" fill="#000" />
<rect x="476" y="310" width="1" height="1" fill="#000" />
<rect x="476" y="331" width="1" height="1" fill="#000" />
<rect x="476" y="353" width="1" height="1" fill="#000" />
<rect x="476" y="375" width="1" height="1" fill="#000" />
<rect x="476" y="397" width="1" height="1" fill="#000" />
<rect x="476" y="418" width="1" height="1" fill="#000" />
<rect x="476" y="440" width="1" height="1" fill="#000" />
<rect x="476" y="462" width="1" height="1" fill="#000" />
<rect x="476" y="483" width="1" height="1" fill="#000" />
<rect x="476" y="505" width="1" height="1" fill="#000" />
<rect x="476" y="527" width="1" height="1" fill="#000" />
<rect x="476" y="549" width="1" height="1" fill="#000" />
<rect x="476" y="570" width="1" height="1" fill="#000" />
<rect x="74" y="96" width="1" height="491" fill="#0000ff" />
<rect x="487" y="96" width="1" height="491" fill="#0000ff" />
<rect x="74" y="96" width="414" height="1" fill="#0000ff" />
<rect x="74" y="586" width="414" height="1" fill="#0000ff" />
<rect x="74" y="568" width="414" height="1" fill="#0000ff" />
<rect x="281" y="78" width="1" height="19" fill="#0000ff" />
<rect x="97" y="568" width="1" height="19" fill="#0000ff" />
<rect x="114" y="568" width="1" height="19" fill="#0000ff" />
<rect x="275" y="568" width="1" height="19" fill="#0000ff" />
<rect x="339" y="568" width="1" height="19" fill="#0000ff" />
<rect x="423" y="568" width="1" height="19" fill="#0000ff" />
<rect x="488" y="397" width="5" height="1" fill="#0000ff" />
<rect x="73" y="388" width="4" height="1" fill="#0000ff" />
<rect x="76" y="388" width="1" height="17" fill="#0000ff" />
<rect x="72" y="404" width="5" height="1" fill="#0000ff" />
<rect x="70" y="390" width="4" height="1" fill="#0000ff" />
<rect x="73" y="389" width="1" height="1" fill="#0000ff" />
<rect x="72" y="391" width="1" height="1" fill="#0000ff" />
<rect x="72" y="392" width="1" height="1" fill="#0000ff" />
<rect x="71" y="393" width="1" height="1" fill="#0000ff" />
<rect x="71" y="394" width="1" height="1" fill="#0000ff" />
<rect x="70" y="395" width="1" height="1" fill="#0000ff" />
<rect x="70" y="399" width="1" height="1" fill="#0000ff" />
<rect x="71" y="400" width="1" height="1" fill="#0000ff" />
<rect x="72" y="401" width="1" height="1" fill="#0000ff" />
<rect x="72" y="402" width="1" height="1" fill="#0000ff" />
<rect x="73" y="403" width="1" height="1" fill="#0000ff" />
<rect x="70" y="403" width="3" height="1" fill="#0000ff" />
<rect x="70" y="397" width="12" height="1" fill="#0000ff" />
</g></svg>
<svg width="602" height="647" viewBox="0 0 602 647">
<g clip-path="url(#cv2)">
<defs><clipPath id="cv2"><rect x="70" y="78" width="422" height="509"/></clipPath></defs>
<defs><clipPath id="prof"><path d="M150 150 H155 V139 H172 V150 H265 V139 H296 V150 H389 V139 H411 V183 H150 Z"/></clipPath></defs>
<path clip-path="url(#prof)" d="M159 130h1v1h-1zM158 131h1v1h-1zM157 132h1v1h-1zM156 133h1v1h-1zM155 134h1v1h-1zM154 135h1v1h-1zM153 136h1v1h-1zM152 137h1v1h-1zM151 138h1v1h-1zM150 139h1v1h-1zM149 140h1v1h-1zM148 141h1v1h-1zM147 142h1v1h-1zM146 143h1v1h-1zM145 144h1v1h-1zM144 145h1v1h-1zM143 146h1v1h-1zM142 147h1v1h-1zM141 148h1v1h-1zM140 149h1v1h-1zM139 150h1v1h-1zM138 151h1v1h-1zM137 152h1v1h-1zM136 153h1v1h-1zM135 154h1v1h-1zM134 155h1v1h-1zM133 156h1v1h-1zM132 157h1v1h-1zM131 158h1v1h-1zM130 159h1v1h-1zM129 160h1v1h-1zM128 161h1v1h-1zM127 162h1v1h-1zM126 163h1v1h-1zM125 164h1v1h-1zM124 165h1v1h-1zM123 166h1v1h-1zM122 167h1v1h-1zM121 168h1v1h-1zM120 169h1v1h-1zM119 170h1v1h-1zM118 171h1v1h-1zM117 172h1v1h-1zM116 173h1v1h-1zM115 174h1v1h-1zM114 175h1v1h-1zM113 176h1v1h-1zM112 177h1v1h-1zM111 178h1v1h-1zM110 179h1v1h-1zM109 180h1v1h-1zM108 181h1v1h-1zM107 182h1v1h-1zM106 183h1v1h-1zM105 184h1v1h-1zM104 185h1v1h-1zM103 186h1v1h-1zM102 187h1v1h-1zM101 188h1v1h-1zM100 189h1v1h-1zM181 130h1v1h-1zM180 131h1v1h-1zM179 132h1v1h-1zM178 133h1v1h-1zM177 134h1v1h-1zM176 135h1v1h-1zM175 136h1v1h-1zM174 137h1v1h-1zM173 138h1v1h-1zM172 139h1v1h-1zM171 140h1v1h-1zM170 141h1v1h-1zM169 142h1v1h-1zM168 143h1v1h-1zM167 144h1v1h-1zM166 145h1v1h-1zM165 146h1v1h-1zM164 147h1v1h-1zM163 148h1v1h-1zM162 149h1v1h-1zM161 150h1v1h-1zM160 151h1v1h-1zM159 152h1v1h-1zM158 153h1v1h-1zM157 154h1v1h-1zM156 155h1v1h-1zM155 156h1v1h-1zM154 157h1v1h-1zM153 158h1v1h-1zM152 159h1v1h-1zM151 160h1v1h-1zM150 161h1v1h-1zM149 162h1v1h-1zM148 163h1v1h-1zM147 164h1v1h-1zM146 165h1v1h-1zM145 166h1v1h-1zM144 167h1v1h-1zM143 168h1v1h-1zM142 169h1v1h-1zM141 170h1v1h-1zM140 171h1v1h-1zM139 172h1v1h-1zM138 173h1v1h-1zM137 174h1v1h-1zM136 175h1v1h-1zM135 176h1v1h-1zM134 177h1v1h-1zM133 178h1v1h-1zM132 179h1v1h-1zM131 180h1v1h-1zM130 181h1v1h-1zM129 182h1v1h-1zM128 183h1v1h-1zM127 184h1v1h-1zM126 185h1v1h-1zM125 186h1v1h-1zM124 187h1v1h-1zM123 188h1v1h-1zM122 189h1v1h-1zM202 130h1v1h-1zM201 131h1v1h-1zM200 132h1v1h-1zM199 133h1v1h-1zM198 134h1v1h-1zM197 135h1v1h-1zM196 136h1v1h-1zM195 137h1v1h-1zM194 138h1v1h-1zM193 139h1v1h-1zM192 140h1v1h-1zM191 141h1v1h-1zM190 142h1v1h-1zM189 143h1v1h-1zM188 144h1v1h-1zM187 145h1v1h-1zM186 146h1v1h-1zM185 147h1v1h-1zM184 148h1v1h-1zM183 149h1v1h-1zM182 150h1v1h-1zM181 151h1v1h-1zM180 152h1v1h-1zM179 153h1v1h-1zM178 154h1v1h-1zM177 155h1v1h-1zM176 156h1v1h-1zM175 157h1v1h-1zM174 158h1v1h-1zM173 159h1v1h-1zM172 160h1v1h-1zM171 161h1v1h-1zM170 162h1v1h-1zM169 163h1v1h-1zM168 164h1v1h-1zM167 165h1v1h-1zM166 166h1v1h-1zM165 167h1v1h-1zM164 168h1v1h-1zM163 169h1v1h-1zM162 170h1v1h-1zM161 171h1v1h-1zM160 172h1v1h-1zM159 173h1v1h-1zM158 174h1v1h-1zM157 175h1v1h-1zM156 176h1v1h-1zM155 177h1v1h-1zM154 178h1v1h-1zM153 179h1v1h-1zM152 180h1v1h-1zM151 181h1v1h-1zM150 182h1v1h-1zM149 183h1v1h-1zM148 184h1v1h-1zM147 185h1v1h-1zM146 186h1v1h-1zM145 187h1v1h-1zM144 188h1v1h-1zM143 189h1v1h-1zM224 130h1v1h-1zM223 131h1v1h-1zM222 132h1v1h-1zM221 133h1v1h-1zM220 134h1v1h-1zM219 135h1v1h-1zM218 136h1v1h-1zM217 137h1v1h-1zM216 138h1v1h-1zM215 139h1v1h-1zM214 140h1v1h-1zM213 141h1v1h-1zM212 142h1v1h-1zM211 143h1v1h-1zM210 144h1v1h-1zM209 145h1v1h-1zM208 146h1v1h-1zM207 147h1v1h-1zM206 148h1v1h-1zM205 149h1v1h-1zM204 150h1v1h-1zM203 151h1v1h-1zM202 152h1v1h-1zM201 153h1v1h-1zM200 154h1v1h-1zM199 155h1v1h-1zM198 156h1v1h-1zM197 157h1v1h-1zM196 158h1v1h-1zM195 159h1v1h-1zM194 160h1v1h-1zM193 161h1v1h-1zM192 162h1v1h-1zM191 163h1v1h-1zM190 164h1v1h-1zM189 165h1v1h-1zM188 166h1v1h-1zM187 167h1v1h-1zM186 168h1v1h-1zM185 169h1v1h-1zM184 170h1v1h-1zM183 171h1v1h-1zM182 172h1v1h-1zM181 173h1v1h-1zM180 174h1v1h-1zM179 175h1v1h-1zM178 176h1v1h-1zM177 177h1v1h-1zM176 178h1v1h-1zM175 179h1v1h-1zM174 180h1v1h-1zM173 181h1v1h-1zM172 182h1v1h-1zM171 183h1v1h-1zM170 184h1v1h-1zM169 185h1v1h-1zM168 186h1v1h-1zM167 187h1v1h-1zM166 188h1v1h-1zM165 189h1v1h-1zM246 130h1v1h-1zM245 131h1v1h-1zM244 132h1v1h-1zM243 133h1v1h-1zM242 134h1v1h-1zM241 135h1v1h-1zM240 136h1v1h-1zM239 137h1v1h-1zM238 138h1v1h-1zM237 139h1v1h-1zM236 140h1v1h-1zM235 141h1v1h-1zM234 142h1v1h-1zM233 143h1v1h-1zM232 144h1v1h-1zM231 145h1v1h-1zM230 146h1v1h-1zM229 147h1v1h-1zM228 148h1v1h-1zM227 149h1v1h-1zM226 150h1v1h-1zM225 151h1v1h-1zM224 152h1v1h-1zM223 153h1v1h-1zM222 154h1v1h-1zM221 155h1v1h-1zM220 156h1v1h-1zM219 157h1v1h-1zM218 158h1v1h-1zM217 159h1v1h-1zM216 160h1v1h-1zM215 161h1v1h-1zM214 162h1v1h-1zM213 163h1v1h-1zM212 164h1v1h-1zM211 165h1v1h-1zM210 166h1v1h-1zM209 167h1v1h-1zM208 168h1v1h-1zM207 169h1v1h-1zM206 170h1v1h-1zM205 171h1v1h-1zM204 172h1v1h-1zM203 173h1v1h-1zM202 174h1v1h-1zM201 175h1v1h-1zM200 176h1v1h-1zM199 177h1v1h-1zM198 178h1v1h-1zM197 179h1v1h-1zM196 180h1v1h-1zM195 181h1v1h-1zM194 182h1v1h-1zM193 183h1v1h-1zM192 184h1v1h-1zM191 185h1v1h-1zM190 186h1v1h-1zM189 187h1v1h-1zM188 188h1v1h-1zM187 189h1v1h-1zM268 130h1v1h-1zM267 131h1v1h-1zM266 132h1v1h-1zM265 133h1v1h-1zM264 134h1v1h-1zM263 135h1v1h-1zM262 136h1v1h-1zM261 137h1v1h-1zM260 138h1v1h-1zM259 139h1v1h-1zM258 140h1v1h-1zM257 141h1v1h-1zM256 142h1v1h-1zM255 143h1v1h-1zM254 144h1v1h-1zM253 145h1v1h-1zM252 146h1v1h-1zM251 147h1v1h-1zM250 148h1v1h-1zM249 149h1v1h-1zM248 150h1v1h-1zM247 151h1v1h-1zM246 152h1v1h-1zM245 153h1v1h-1zM244 154h1v1h-1zM243 155h1v1h-1zM242 156h1v1h-1zM241 157h1v1h-1zM240 158h1v1h-1zM239 159h1v1h-1zM238 160h1v1h-1zM237 161h1v1h-1zM236 162h1v1h-1zM235 163h1v1h-1zM234 164h1v1h-1zM233 165h1v1h-1zM232 166h1v1h-1zM231 167h1v1h-1zM230 168h1v1h-1zM229 169h1v1h-1zM228 170h1v1h-1zM227 171h1v1h-1zM226 172h1v1h-1zM225 173h1v1h-1zM224 174h1v1h-1zM223 175h1v1h-1zM222 176h1v1h-1zM221 177h1v1h-1zM220 178h1v1h-1zM219 179h1v1h-1zM218 180h1v1h-1zM217 181h1v1h-1zM216 182h1v1h-1zM215 183h1v1h-1zM214 184h1v1h-1zM213 185h1v1h-1zM212 186h1v1h-1zM211 187h1v1h-1zM210 188h1v1h-1zM209 189h1v1h-1zM289 130h1v1h-1zM288 131h1v1h-1zM287 132h1v1h-1zM286 133h1v1h-1zM285 134h1v1h-1zM284 135h1v1h-1zM283 136h1v1h-1zM282 137h1v1h-1zM281 138h1v1h-1zM280 139h1v1h-1zM279 140h1v1h-1zM278 141h1v1h-1zM277 142h1v1h-1zM276 143h1v1h-1zM275 144h1v1h-1zM274 145h1v1h-1zM273 146h1v1h-1zM272 147h1v1h-1zM271 148h1v1h-1zM270 149h1v1h-1zM269 150h1v1h-1zM268 151h1v1h-1zM267 152h1v1h-1zM266 153h1v1h-1zM265 154h1v1h-1zM264 155h1v1h-1zM263 156h1v1h-1zM262 157h1v1h-1zM261 158h1v1h-1zM260 159h1v1h-1zM259 160h1v1h-1zM258 161h1v1h-1zM257 162h1v1h-1zM256 163h1v1h-1zM255 164h1v1h-1zM254 165h1v1h-1zM253 166h1v1h-1zM252 167h1v1h-1zM251 168h1v1h-1zM250 169h1v1h-1zM249 170h1v1h-1zM248 171h1v1h-1zM247 172h1v1h-1zM246 173h1v1h-1zM245 174h1v1h-1zM244 175h1v1h-1zM243 176h1v1h-1zM242 177h1v1h-1zM241 178h1v1h-1zM240 179h1v1h-1zM239 180h1v1h-1zM238 181h1v1h-1zM237 182h1v1h-1zM236 183h1v1h-1zM235 184h1v1h-1zM234 185h1v1h-1zM233 186h1v1h-1zM232 187h1v1h-1zM231 188h1v1h-1zM230 189h1v1h-1zM311 130h1v1h-1zM310 131h1v1h-1zM309 132h1v1h-1zM308 133h1v1h-1zM307 134h1v1h-1zM306 135h1v1h-1zM305 136h1v1h-1zM304 137h1v1h-1zM303 138h1v1h-1zM302 139h1v1h-1zM301 140h1v1h-1zM300 141h1v1h-1zM299 142h1v1h-1zM298 143h1v1h-1zM297 144h1v1h-1zM296 145h1v1h-1zM295 146h1v1h-1zM294 147h1v1h-1zM293 148h1v1h-1zM292 149h1v1h-1zM291 150h1v1h-1zM290 151h1v1h-1zM289 152h1v1h-1zM288 153h1v1h-1zM287 154h1v1h-1zM286 155h1v1h-1zM285 156h1v1h-1zM284 157h1v1h-1zM283 158h1v1h-1zM282 159h1v1h-1zM281 160h1v1h-1zM280 161h1v1h-1zM279 162h1v1h-1zM278 163h1v1h-1zM277 164h1v1h-1zM276 165h1v1h-1zM275 166h1v1h-1zM274 167h1v1h-1zM273 168h1v1h-1zM272 169h1v1h-1zM271 170h1v1h-1zM270 171h1v1h-1zM269 172h1v1h-1zM268 173h1v1h-1zM267 174h1v1h-1zM266 175h1v1h-1zM265 176h1v1h-1zM264 177h1v1h-1zM263 178h1v1h-1zM262 179h1v1h-1zM261 180h1v1h-1zM260 181h1v1h-1zM259 182h1v1h-1zM258 183h1v1h-1zM257 184h1v1h-1zM256 185h1v1h-1zM255 186h1v1h-1zM254 187h1v1h-1zM253 188h1v1h-1zM252 189h1v1h-1zM333 130h1v1h-1zM332 131h1v1h-1zM331 132h1v1h-1zM330 133h1v1h-1zM329 134h1v1h-1zM328 135h1v1h-1zM327 136h1v1h-1zM326 137h1v1h-1zM325 138h1v1h-1zM324 139h1v1h-1zM323 140h1v1h-1zM322 141h1v1h-1zM321 142h1v1h-1zM320 143h1v1h-1zM319 144h1v1h-1zM318 145h1v1h-1zM317 146h1v1h-1zM316 147h1v1h-1zM315 148h1v1h-1zM314 149h1v1h-1zM313 150h1v1h-1zM312 151h1v1h-1zM311 152h1v1h-1zM310 153h1v1h-1zM309 154h1v1h-1zM308 155h1v1h-1zM307 156h1v1h-1zM306 157h1v1h-1zM305 158h1v1h-1zM304 159h1v1h-1zM303 160h1v1h-1zM302 161h1v1h-1zM301 162h1v1h-1zM300 163h1v1h-1zM299 164h1v1h-1zM298 165h1v1h-1zM297 166h1v1h-1zM296 167h1v1h-1zM295 168h1v1h-1zM294 169h1v1h-1zM293 170h1v1h-1zM292 171h1v1h-1zM291 172h1v1h-1zM290 173h1v1h-1zM289 174h1v1h-1zM288 175h1v1h-1zM287 176h1v1h-1zM286 177h1v1h-1zM285 178h1v1h-1zM284 179h1v1h-1zM283 180h1v1h-1zM282 181h1v1h-1zM281 182h1v1h-1zM280 183h1v1h-1zM279 184h1v1h-1zM278 185h1v1h-1zM277 186h1v1h-1zM276 187h1v1h-1zM275 188h1v1h-1zM274 189h1v1h-1zM354 130h1v1h-1zM353 131h1v1h-1zM352 132h1v1h-1zM351 133h1v1h-1zM350 134h1v1h-1zM349 135h1v1h-1zM348 136h1v1h-1zM347 137h1v1h-1zM346 138h1v1h-1zM345 139h1v1h-1zM344 140h1v1h-1zM343 141h1v1h-1zM342 142h1v1h-1zM341 143h1v1h-1zM340 144h1v1h-1zM339 145h1v1h-1zM338 146h1v1h-1zM337 147h1v1h-1zM336 148h1v1h-1zM335 149h1v1h-1zM334 150h1v1h-1zM333 151h1v1h-1zM332 152h1v1h-1zM331 153h1v1h-1zM330 154h1v1h-1zM329 155h1v1h-1zM328 156h1v1h-1zM327 157h1v1h-1zM326 158h1v1h-1zM325 159h1v1h-1zM324 160h1v1h-1zM323 161h1v1h-1zM322 162h1v1h-1zM321 163h1v1h-1zM320 164h1v1h-1zM319 165h1v1h-1zM318 166h1v1h-1zM317 167h1v1h-1zM316 168h1v1h-1zM315 169h1v1h-1zM314 170h1v1h-1zM313 171h1v1h-1zM312 172h1v1h-1zM311 173h1v1h-1zM310 174h1v1h-1zM309 175h1v1h-1zM308 176h1v1h-1zM307 177h1v1h-1zM306 178h1v1h-1zM305 179h1v1h-1zM304 180h1v1h-1zM303 181h1v1h-1zM302 182h1v1h-1zM301 183h1v1h-1zM300 184h1v1h-1zM299 185h1v1h-1zM298 186h1v1h-1zM297 187h1v1h-1zM296 188h1v1h-1zM295 189h1v1h-1zM376 130h1v1h-1zM375 131h1v1h-1zM374 132h1v1h-1zM373 133h1v1h-1zM372 134h1v1h-1zM371 135h1v1h-1zM370 136h1v1h-1zM369 137h1v1h-1zM368 138h1v1h-1zM367 139h1v1h-1zM366 140h1v1h-1zM365 141h1v1h-1zM364 142h1v1h-1zM363 143h1v1h-1zM362 144h1v1h-1zM361 145h1v1h-1zM360 146h1v1h-1zM359 147h1v1h-1zM358 148h1v1h-1zM357 149h1v1h-1zM356 150h1v1h-1zM355 151h1v1h-1zM354 152h1v1h-1zM353 153h1v1h-1zM352 154h1v1h-1zM351 155h1v1h-1zM350 156h1v1h-1zM349 157h1v1h-1zM348 158h1v1h-1zM347 159h1v1h-1zM346 160h1v1h-1zM345 161h1v1h-1zM344 162h1v1h-1zM343 163h1v1h-1zM342 164h1v1h-1zM341 165h1v1h-1zM340 166h1v1h-1zM339 167h1v1h-1zM338 168h1v1h-1zM337 169h1v1h-1zM336 170h1v1h-1zM335 171h1v1h-1zM334 172h1v1h-1zM333 173h1v1h-1zM332 174h1v1h-1zM331 175h1v1h-1zM330 176h1v1h-1zM329 177h1v1h-1zM328 178h1v1h-1zM327 179h1v1h-1zM326 180h1v1h-1zM325 181h1v1h-1zM324 182h1v1h-1zM323 183h1v1h-1zM322 184h1v1h-1zM321 185h1v1h-1zM320 186h1v1h-1zM319 187h1v1h-1zM318 188h1v1h-1zM317 189h1v1h-1zM398 130h1v1h-1zM397 131h1v1h-1zM396 132h1v1h-1zM395 133h1v1h-1zM394 134h1v1h-1zM393 135h1v1h-1zM392 136h1v1h-1zM391 137h1v1h-1zM390 138h1v1h-1zM389 139h1v1h-1zM388 140h1v1h-1zM387 141h1v1h-1zM386 142h1v1h-1zM385 143h1v1h-1zM384 144h1v1h-1zM383 145h1v1h-1zM382 146h1v1h-1zM381 147h1v1h-1zM380 148h1v1h-1zM379 149h1v1h-1zM378 150h1v1h-1zM377 151h1v1h-1zM376 152h1v1h-1zM375 153h1v1h-1zM374 154h1v1h-1zM373 155h1v1h-1zM372 156h1v1h-1zM371 157h1v1h-1zM370 158h1v1h-1zM369 159h1v1h-1zM368 160h1v1h-1zM367 161h1v1h-1zM366 162h1v1h-1zM365 163h1v1h-1zM364 164h1v1h-1zM363 165h1v1h-1zM362 166h1v1h-1zM361 167h1v1h-1zM360 168h1v1h-1zM359 169h1v1h-1zM358 170h1v1h-1zM357 171h1v1h-1zM356 172h1v1h-1zM355 173h1v1h-1zM354 174h1v1h-1zM353 175h1v1h-1zM352 176h1v1h-1zM351 177h1v1h-1zM350 178h1v1h-1zM349 179h1v1h-1zM348 180h1v1h-1zM347 181h1v1h-1zM346 182h1v1h-1zM345 183h1v1h-1zM344 184h1v1h-1zM343 185h1v1h-1zM342 186h1v1h-1zM341 187h1v1h-1zM340 188h1v1h-1zM339 189h1v1h-1zM420 130h1v1h-1zM419 131h1v1h-1zM418 132h1v1h-1zM417 133h1v1h-1zM416 134h1v1h-1zM415 135h1v1h-1zM414 136h1v1h-1zM413 137h1v1h-1zM412 138h1v1h-1zM411 139h1v1h-1zM410 140h1v1h-1zM409 141h1v1h-1zM408 142h1v1h-1zM407 143h1v1h-1zM406 144h1v1h-1zM405 145h1v1h-1zM404 146h1v1h-1zM403 147h1v1h-1zM402 148h1v1h-1zM401 149h1v1h-1zM400 150h1v1h-1zM399 151h1v1h-1zM398 152h1v1h-1zM397 153h1v1h-1zM396 154h1v1h-1zM395 155h1v1h-1zM394 156h1v1h-1zM393 157h1v1h-1zM392 158h1v1h-1zM391 159h1v1h-1zM390 160h1v1h-1zM389 161h1v1h-1zM388 162h1v1h-1zM387 163h1v1h-1zM386 164h1v1h-1zM385 165h1v1h-1zM384 166h1v1h-1zM383 167h1v1h-1zM382 168h1v1h-1zM381 169h1v1h-1zM380 170h1v1h-1zM379 171h1v1h-1zM378 172h1v1h-1zM377 173h1v1h-1zM376 174h1v1h-1zM375 175h1v1h-1zM374 176h1v1h-1zM373 177h1v1h-1zM372 178h1v1h-1zM371 179h1v1h-1zM370 180h1v1h-1zM369 181h1v1h-1zM368 182h1v1h-1zM367 183h1v1h-1zM366 184h1v1h-1zM365 185h1v1h-1zM364 186h1v1h-1zM363 187h1v1h-1zM362 188h1v1h-1zM361 189h1v1h-1zM441 130h1v1h-1zM440 131h1v1h-1zM439 132h1v1h-1zM438 133h1v1h-1zM437 134h1v1h-1zM436 135h1v1h-1zM435 136h1v1h-1zM434 137h1v1h-1zM433 138h1v1h-1zM432 139h1v1h-1zM431 140h1v1h-1zM430 141h1v1h-1zM429 142h1v1h-1zM428 143h1v1h-1zM427 144h1v1h-1zM426 145h1v1h-1zM425 146h1v1h-1zM424 147h1v1h-1zM423 148h1v1h-1zM422 149h1v1h-1zM421 150h1v1h-1zM420 151h1v1h-1zM419 152h1v1h-1zM418 153h1v1h-1zM417 154h1v1h-1zM416 155h1v1h-1zM415 156h1v1h-1zM414 157h1v1h-1zM413 158h1v1h-1zM412 159h1v1h-1zM411 160h1v1h-1zM410 161h1v1h-1zM409 162h1v1h-1zM408 163h1v1h-1zM407 164h1v1h-1zM406 165h1v1h-1zM405 166h1v1h-1zM404 167h1v1h-1zM403 168h1v1h-1zM402 169h1v1h-1zM401 170h1v1h-1zM400 171h1v1h-1zM399 172h1v1h-1zM398 173h1v1h-1zM397 174h1v1h-1zM396 175h1v1h-1zM395 176h1v1h-1zM394 177h1v1h-1zM393 178h1v1h-1zM392 179h1v1h-1zM391 180h1v1h-1zM390 181h1v1h-1zM389 182h1v1h-1zM388 183h1v1h-1zM387 184h1v1h-1zM386 185h1v1h-1zM385 186h1v1h-1zM384 187h1v1h-1zM383 188h1v1h-1zM382 189h1v1h-1zM463 130h1v1h-1zM462 131h1v1h-1zM461 132h1v1h-1zM460 133h1v1h-1zM459 134h1v1h-1zM458 135h1v1h-1zM457 136h1v1h-1zM456 137h1v1h-1zM455 138h1v1h-1zM454 139h1v1h-1zM453 140h1v1h-1zM452 141h1v1h-1zM451 142h1v1h-1zM450 143h1v1h-1zM449 144h1v1h-1zM448 145h1v1h-1zM447 146h1v1h-1zM446 147h1v1h-1zM445 148h1v1h-1zM444 149h1v1h-1zM443 150h1v1h-1zM442 151h1v1h-1zM441 152h1v1h-1zM440 153h1v1h-1zM439 154h1v1h-1zM438 155h1v1h-1zM437 156h1v1h-1zM436 157h1v1h-1zM435 158h1v1h-1zM434 159h1v1h-1zM433 160h1v1h-1zM432 161h1v1h-1zM431 162h1v1h-1zM430 163h1v1h-1zM429 164h1v1h-1zM428 165h1v1h-1zM427 166h1v1h-1zM426 167h1v1h-1zM425 168h1v1h-1zM424 169h1v1h-1zM423 170h1v1h-1zM422 171h1v1h-1zM421 172h1v1h-1zM420 173h1v1h-1zM419 174h1v1h-1zM418 175h1v1h-1zM417 176h1v1h-1zM416 177h1v1h-1zM415 178h1v1h-1zM414 179h1v1h-1zM413 180h1v1h-1zM412 181h1v1h-1zM411 182h1v1h-1zM410 183h1v1h-1zM409 184h1v1h-1zM408 185h1v1h-1zM407 186h1v1h-1zM406 187h1v1h-1zM405 188h1v1h-1zM404 189h1v1h-1z" fill="#0000ff" shape-rendering="crispEdges"/>
<circle cx="389.5" cy="139.5" r="4" fill="none" stroke="#ff0000" stroke-width="1" shape-rendering="crispEdges"/>
<path d="M389.5 139.5 L385.5 139.5 A4 4 0 0 0 389.5 143.5 Z" fill="#ff0000"/>
<path d="M155 139 H411 V183 H150 V150 H155 Z M172 139 V150 H265 V139 M296 139 V150 H389 V139" fill="none" stroke="#000080" stroke-width="2" stroke-linejoin="miter" shape-rendering="crispEdges"/>
<path d="M150 266 H411 V527 H150 Z" fill="none" stroke="#000080" stroke-width="2" shape-rendering="crispEdges"/>
<path d="M150 484 L172 266 L221.5 325.5 Q225 331 229.5 331 H332 Q337 331 340.5 326 L390 266 L411 484" fill="none" stroke="#000080" stroke-width="2" shape-rendering="crispEdges"/>
<path d="M150 484 L281.5 527 L411 484" fill="none" stroke="#000080" stroke-width="2" shape-rendering="crispEdges"/>
<path d="M177 407.6 H219 Q230 408.5 240 413 Q247 416 254 424 L262 432.5 Q266 437 268.5 446 Q270.5 452 270.5 458 V464 Q270 470 264 472.6 H190 Q183 471.5 180 466 L165 418 Q165 410 171 409 Q173 407.6 177 407.6 Z" fill="none" stroke="#000080" stroke-width="2" shape-rendering="crispEdges"/>
<path d="M343 407.6 H384.6 Q391 408 394 412 Q396.5 416 395.6 421 L382.6 465.7 Q380 471 376 472.4 H301 Q293 471.5 291 467 Q290 463 290.8 458 Q292 450 294.5 445 Q297 436 302 429 L310 420 Q318 414 326 411 Q334 408 343 407.6 Z" fill="none" stroke="#000080" stroke-width="2" shape-rendering="crispEdges"/>
<circle cx="281.5" cy="397.5" r="6.3" fill="none" stroke="#ff0000" stroke-width="1" shape-rendering="crispEdges"/>
<path d="M281.5 397.5 L275.2 397.5 A6.3 6.3 0 0 0 281.5 403.8 Z" fill="#ff0000"/>
<path d="M270 397.5 H294 M281.5 384 V411" stroke="#ff0000" stroke-width="1" shape-rendering="crispEdges"/>
<path d="M281.5 244 V571" stroke="#8a0000" stroke-width="1" stroke-dasharray="7 3 2 3" shape-rendering="crispEdges"/>
<path d="M107 440.5 H455" stroke="#ff0000" stroke-width="1" stroke-dasharray="7 3 2 3" shape-rendering="crispEdges"/>
</g>
<rect x="14" y="84" width="13" height="1" fill="#000"/><rect x="13" y="85" width="1" height="1" fill="#000"/><rect x="12" y="85" width="1" height="1" fill="#000"/><rect x="11" y="86" width="1" height="1" fill="#000"/><rect x="10" y="87" width="1" height="1" fill="#000"/><rect x="10" y="88" width="1" height="1" fill="#000"/><rect x="9" y="89" width="1" height="7" fill="#000"/><rect x="9" y="95" width="6" height="1" fill="#000"/><rect x="14" y="95" width="1" height="5" fill="#000"/><rect x="14" y="99" width="13" height="1" fill="#000"/><rect x="26" y="84" width="1" height="16" fill="#000"/><rect x="14" y="88" width="3" height="1" fill="#000"/><rect x="14" y="92" width="3" height="1" fill="#000"/><rect x="13" y="89" width="1" height="3" fill="#000"/><rect x="17" y="89" width="1" height="3" fill="#000"/><rect x="22" y="90" width="1" height="6" fill="#000"/><rect x="17" y="95" width="6" height="1" fill="#000"/><rect x="17" y="95" width="1" height="1" fill="#000"/><rect x="18" y="94" width="1" height="1" fill="#000"/><rect x="19" y="93" width="1" height="1" fill="#000"/><rect x="20" y="92" width="1" height="1" fill="#000"/><rect x="21" y="91" width="1" height="1" fill="#000"/>
<rect x="46" y="84" width="13" height="1" fill="#ff0000"/><rect x="45" y="85" width="1" height="1" fill="#ff0000"/><rect x="44" y="85" width="1" height="1" fill="#ff0000"/><rect x="43" y="86" width="1" height="1" fill="#ff0000"/><rect x="42" y="87" width="1" height="1" fill="#ff0000"/><rect x="42" y="88" width="1" height="1" fill="#ff0000"/><rect x="41" y="89" width="1" height="7" fill="#ff0000"/><rect x="41" y="95" width="6" height="1" fill="#ff0000"/><rect x="46" y="95" width="1" height="5" fill="#ff0000"/><rect x="46" y="99" width="13" height="1" fill="#ff0000"/><rect x="58" y="84" width="1" height="16" fill="#ff0000"/><rect x="46" y="88" width="3" height="1" fill="#ff0000"/><rect x="46" y="92" width="3" height="1" fill="#ff0000"/><rect x="45" y="89" width="1" height="3" fill="#ff0000"/><rect x="49" y="89" width="1" height="3" fill="#ff0000"/><rect x="54" y="90" width="1" height="6" fill="#ff0000"/><rect x="49" y="95" width="6" height="1" fill="#ff0000"/><rect x="49" y="95" width="1" height="1" fill="#ff0000"/><rect x="50" y="94" width="1" height="1" fill="#ff0000"/><rect x="51" y="93" width="1" height="1" fill="#ff0000"/><rect x="52" y="92" width="1" height="1" fill="#ff0000"/><rect x="53" y="91" width="1" height="1" fill="#ff0000"/>
<path d="M11 123.5 L25.5 115.5" stroke="#ff0000" stroke-width="1.3" shape-rendering="auto"/>
<path d="M18.5 120.5 V130.5 L20.8 128.3 L22.8 132.5 L24.3 131.8 L22.5 127.8 L25.5 127.8 Z" fill="#fff" stroke="#000" stroke-width="1" shape-rendering="auto"/>
<rect x="46" y="116" width="13" height="1" fill="#ff0000"/><rect x="45" y="117" width="1" height="1" fill="#ff0000"/><rect x="44" y="117" width="1" height="1" fill="#ff0000"/><rect x="43" y="118" width="1" height="1" fill="#ff0000"/><rect x="42" y="119" width="1" height="1" fill="#ff0000"/><rect x="42" y="120" width="1" height="1" fill="#ff0000"/><rect x="41" y="121" width="1" height="7" fill="#ff0000"/><rect x="41" y="127" width="6" height="1" fill="#ff0000"/><rect x="46" y="127" width="1" height="5" fill="#ff0000"/><rect x="46" y="131" width="13" height="1" fill="#ff0000"/><rect x="58" y="116" width="1" height="16" fill="#ff0000"/><rect x="46" y="120" width="3" height="1" fill="#000"/><rect x="46" y="124" width="3" height="1" fill="#000"/><rect x="45" y="121" width="1" height="3" fill="#000"/><rect x="49" y="121" width="1" height="3" fill="#000"/><rect x="54" y="122" width="1" height="6" fill="#000"/><rect x="49" y="127" width="6" height="1" fill="#000"/><rect x="49" y="127" width="1" height="1" fill="#000"/><rect x="50" y="126" width="1" height="1" fill="#000"/><rect x="51" y="125" width="1" height="1" fill="#000"/><rect x="52" y="124" width="1" height="1" fill="#000"/><rect x="53" y="123" width="1" height="1" fill="#000"/>
<rect x="10.5" y="149.5" width="15" height="14" fill="none" stroke="#0000ff" stroke-width="1"/><rect x="9" y="148" width="3" height="3" fill="#000"/><rect x="25" y="163" width="3" height="3" fill="#000"/><rect x="14" y="152" width="3" height="1" fill="#000"/><rect x="14" y="156" width="3" height="1" fill="#000"/><rect x="13" y="153" width="1" height="3" fill="#000"/><rect x="17" y="153" width="1" height="3" fill="#000"/><rect x="22" y="154" width="1" height="6" fill="#000"/><rect x="17" y="159" width="6" height="1" fill="#000"/><rect x="17" y="159" width="1" height="1" fill="#000"/><rect x="18" y="158" width="1" height="1" fill="#000"/><rect x="19" y="157" width="1" height="1" fill="#000"/><rect x="20" y="156" width="1" height="1" fill="#000"/><rect x="21" y="155" width="1" height="1" fill="#000"/>
<rect x="42.5" y="149.5" width="15" height="14" fill="none" stroke="#0000ff" stroke-width="1"/><rect x="41" y="148" width="3" height="3" fill="#000"/><rect x="57" y="163" width="3" height="3" fill="#000"/><rect x="46" y="152" width="3" height="1" fill="#ff0000"/><rect x="46" y="156" width="3" height="1" fill="#ff0000"/><rect x="45" y="153" width="1" height="3" fill="#ff0000"/><rect x="49" y="153" width="1" height="3" fill="#ff0000"/><rect x="54" y="154" width="1" height="6" fill="#ff0000"/><rect x="49" y="159" width="6" height="1" fill="#ff0000"/><rect x="49" y="159" width="1" height="1" fill="#ff0000"/><rect x="50" y="158" width="1" height="1" fill="#ff0000"/><rect x="51" y="157" width="1" height="1" fill="#ff0000"/><rect x="52" y="156" width="1" height="1" fill="#ff0000"/><rect x="53" y="155" width="1" height="1" fill="#ff0000"/>
<rect x="15" y="181" width="11" height="1" fill="#000"/><rect x="14" y="182" width="1" height="1" fill="#ff0000"/><rect x="13" y="182" width="1" height="1" fill="#ff0000"/><rect x="12" y="183" width="1" height="1" fill="#ff0000"/><rect x="11" y="184" width="1" height="1" fill="#ff0000"/><rect x="11" y="185" width="1" height="7" fill="#ff0000"/><rect x="11" y="191" width="5" height="1" fill="#ff0000"/><rect x="15" y="191" width="1" height="3" fill="#ff0000"/><rect x="15" y="194" width="11" height="1" fill="#000"/><rect x="20" y="194" width="6" height="1" fill="#000"/><rect x="25" y="182" width="1" height="12" fill="#ff0000"/><rect x="15" y="184" width="3" height="1" fill="#ff0000"/><rect x="15" y="188" width="3" height="1" fill="#ff0000"/><rect x="14" y="185" width="1" height="3" fill="#ff0000"/><rect x="18" y="185" width="1" height="3" fill="#ff0000"/><rect x="22" y="187" width="1" height="5" fill="#000"/><rect x="18" y="191" width="5" height="1" fill="#000"/><rect x="18" y="191" width="1" height="1" fill="#000"/><rect x="19" y="190" width="1" height="1" fill="#000"/><rect x="20" y="189" width="1" height="1" fill="#000"/><rect x="21" y="188" width="1" height="1" fill="#000"/><rect x="20" y="181" width="1" height="14" fill="#0000ff"/><path d="M17.5 181 L20.5 178 L23.5 181 Z M17.5 195 L20.5 198 L23.5 195 Z" fill="#000"/>
<rect x="47" y="181" width="11" height="1" fill="#000"/><rect x="46" y="182" width="1" height="1" fill="#000"/><rect x="45" y="182" width="1" height="1" fill="#000"/><rect x="44" y="183" width="1" height="1" fill="#000"/><rect x="43" y="184" width="1" height="1" fill="#000"/><rect x="43" y="185" width="1" height="7" fill="#000"/><rect x="43" y="191" width="5" height="1" fill="#000"/><rect x="47" y="191" width="1" height="3" fill="#000"/><rect x="47" y="194" width="11" height="1" fill="#000"/><rect x="52" y="194" width="6" height="1" fill="#ff0000"/><rect x="57" y="182" width="1" height="12" fill="#ff0000"/><rect x="47" y="184" width="3" height="1" fill="#000"/><rect x="47" y="188" width="3" height="1" fill="#000"/><rect x="46" y="185" width="1" height="3" fill="#000"/><rect x="50" y="185" width="1" height="3" fill="#000"/><rect x="54" y="187" width="1" height="5" fill="#ff0000"/><rect x="50" y="191" width="5" height="1" fill="#ff0000"/><rect x="50" y="191" width="1" height="1" fill="#ff0000"/><rect x="51" y="190" width="1" height="1" fill="#ff0000"/><rect x="52" y="189" width="1" height="1" fill="#ff0000"/><rect x="53" y="188" width="1" height="1" fill="#ff0000"/><rect x="52" y="181" width="1" height="14" fill="#0000ff"/><path d="M49.5 181 L52.5 178 L55.5 181 Z M49.5 195 L52.5 198 L55.5 195 Z" fill="#000"/>
<rect x="14" y="212" width="11" height="1" fill="#ff0000"/><rect x="24" y="212" width="1" height="13" fill="#ff0000"/><rect x="13" y="213" width="1" height="1" fill="#ff0000"/><rect x="12" y="214" width="1" height="1" fill="#000"/><rect x="11" y="215" width="1" height="1" fill="#000"/><rect x="10" y="216" width="1" height="7" fill="#000"/><rect x="10" y="222" width="5" height="1" fill="#000"/><rect x="14" y="222" width="1" height="4" fill="#000"/><rect x="14" y="225" width="11" height="1" fill="#000"/><rect x="14" y="215" width="3" height="1" fill="#000"/><rect x="13" y="216" width="1" height="3" fill="#ff0000"/><rect x="17" y="216" width="1" height="3" fill="#000"/><rect x="14" y="219" width="3" height="1" fill="#ff0000"/><rect x="21" y="218" width="1" height="6" fill="#000"/><rect x="17" y="222" width="4" height="1" fill="#ff0000"/><rect x="18" y="221" width="1" height="1" fill="#ff0000"/><rect x="19" y="220" width="1" height="1" fill="#000"/><rect x="20" y="219" width="1" height="1" fill="#000"/>
<path d="M9 212 L27 228" stroke="#0000ff" stroke-width="1.2" stroke-dasharray="1.2 0.6" shape-rendering="auto"/>
<g shape-rendering="auto" stroke="#000" stroke-width="1" fill="#fff"><path d="M43.5 215.5 L51.5 211.5 V224.5 L43.5 228.5 Z"/><path d="M45.5 216.5 L53.5 212.5 V225.5 L45.5 229.5 Z"/><path d="M48.5 217.5 L56.5 213.5 V226.5 L48.5 230.5 Z"/></g><path d="M50.5 226 L54.5 218 V224 Z" fill="none" stroke="#ff0000" stroke-width="1" shape-rendering="auto"/>
<rect x="14" y="244" width="13" height="1" fill="#000"/><rect x="26" y="244" width="1" height="16" fill="#000"/><rect x="25" y="245" width="1" height="14" fill="#ff0000"/><rect x="14" y="259" width="13" height="1" fill="#000"/><rect x="14" y="255" width="1" height="4" fill="#000"/><rect x="9" y="255" width="6" height="1" fill="#000"/><rect x="9" y="249" width="1" height="6" fill="#000"/><rect x="9" y="248" width="1" height="1" fill="#ff0000"/><rect x="10" y="247" width="1" height="1" fill="#000"/><rect x="10" y="246" width="1" height="1" fill="#ff0000"/><rect x="11" y="246" width="1" height="1" fill="#000"/><rect x="12" y="245" width="1" height="1" fill="#ff0000"/><rect x="13" y="245" width="1" height="1" fill="#000"/><rect x="13" y="244" width="1" height="1" fill="#ff0000"/><rect x="14" y="247" width="3" height="1" fill="#000"/><rect x="14" y="252" width="3" height="1" fill="#000"/><rect x="12" y="249" width="1" height="2" fill="#000"/><rect x="18" y="249" width="1" height="2" fill="#000"/><rect x="13" y="248" width="1" height="1" fill="#000"/><rect x="17" y="248" width="1" height="1" fill="#000"/><rect x="13" y="251" width="1" height="1" fill="#000"/><rect x="17" y="251" width="1" height="1" fill="#000"/><rect x="17" y="255" width="6" height="1" fill="#000"/><rect x="22" y="250" width="1" height="6" fill="#000"/><rect x="16" y="255" width="1" height="1" fill="#ff0000"/><rect x="17" y="254" width="1" height="1" fill="#ff0000"/><rect x="18" y="253" width="1" height="1" fill="#ff0000"/><rect x="19" y="252" width="1" height="1" fill="#ff0000"/><rect x="20" y="251" width="1" height="1" fill="#ff0000"/><rect x="21" y="250" width="1" height="1" fill="#ff0000"/><rect x="22" y="249" width="1" height="1" fill="#ff0000"/>
<defs><linearGradient id="cy" x1="0" y1="0" x2="0" y2="1"><stop offset="0" stop-color="#e0ffff"/><stop offset="0.5" stop-color="#40f0f0"/><stop offset="1" stop-color="#00c8d8"/></linearGradient></defs>
<path d="M26.5 282.5 H34.5 V278.5 L40.5 284.5 L34.5 290.5 V286.5 H26.5 Z" fill="url(#cy)" stroke="#000" stroke-width="1" shape-rendering="auto"/><path d="M26.5 286 V282.5 H34.5 V278.5" fill="none" stroke="#0000ff" stroke-width="1.2" shape-rendering="auto"/>
<path d="M18.5 54.5 H24.5 L28.5 58.5 V68.5 H18.5 Z" fill="#fff" stroke="#000"/><path d="M24.5 54.5 V58.5 H28.5" fill="none" stroke="#000"/>
<defs><linearGradient id="fold" x1="0" y1="0" x2="1" y2="1"><stop offset="0" stop-color="#f8e4c0"/><stop offset="0.5" stop-color="#e0b078"/><stop offset="1" stop-color="#b07840"/></linearGradient></defs>
<path d="M38.5 58.5 H43.5 L44.5 59.5 H49.5 V62.5 H40.5 L38.5 68.5 Z" fill="#f0d8a8" stroke="#000"/><path d="M38.5 68.5 L41.5 62.5 H53.5 L50.5 68.5 Z" fill="url(#fold)" stroke="#000"/><path d="M46 55 Q50 53 52 57" fill="none" stroke="#000" stroke-width="1.5"/><path d="M50 57 L54.5 56 L52.5 60 Z" fill="#000"/>
<path d="M63.5 58.5 H67.5 L68.5 59.5 H73.5 V67.5 H63.5 Z" fill="url(#fold)" stroke="#000"/><path d="M60.5 61 V57 Q61 55 64 54.5" fill="none" stroke="#000" stroke-width="1.5"/><path d="M63 52.5 L66.5 54.5 L63 56.5 Z" fill="#000"/>
<rect x="82.5" y="54.5" width="13" height="13" fill="#0000c0" stroke="#000"/><rect x="84" y="56" width="9" height="6" fill="#fff"/><rect x="85" y="57" width="5" height="1" fill="#000"/><rect x="85" y="59" width="4" height="1" fill="#000"/><rect x="86" y="64" width="6" height="3" fill="#fff"/><rect x="88" y="65" width="2" height="2" fill="#0000c0"/><rect x="83" y="55" width="1" height="12" fill="#4040ff"/>
<rect x="111.5" y="54.5" width="12" height="14" fill="#fff" stroke="#000"/><path d="M115.5 57.5 H117.5 L118.5 58.5 V60.5 L117.5 61.5 H115.5 L114.5 60.5 V58.5 Z" fill="none" stroke="#000"/><path d="M116.5 65.5 L120.5 61.5 V65.5 Z" fill="none" stroke="#000"/>
<rect x="134.5" y="53.5" width="10" height="9" fill="#fff" stroke="#000"/><rect x="136" y="55" width="2" height="1" fill="#000"/><rect x="136" y="57" width="2" height="1" fill="#000"/><rect x="136" y="59" width="5" height="1" fill="#000"/><rect x="131.5" y="61.5" width="15" height="5" fill="#e8e8e8" stroke="#000"/><rect x="133" y="63" width="3" height="1" fill="#ff0000"/><rect x="132.5" y="66.5" width="13" height="2" fill="#808080" stroke="#000"/>
<g shape-rendering="crispEdges" fill="#000"><rect x="166" y="55" width="1" height="1"/><rect x="167" y="54" width="1" height="1"/><rect x="170" y="54" width="2" height="1"/><rect x="174" y="54" width="2" height="1"/><rect x="178" y="54" width="4" height="1"/><rect x="181" y="54" width="1" height="10"/><rect x="180" y="64" width="1" height="1"/><rect x="179" y="65" width="1" height="1"/><rect x="178" y="66" width="1" height="1"/><rect x="177" y="67" width="1" height="1"/><rect x="166" y="68" width="12" height="1"/><rect x="166" y="57" width="1" height="2"/><rect x="166" y="61" width="1" height="2"/><rect x="166" y="65" width="1" height="4"/></g><g shape-rendering="crispEdges" fill="#ff0000"><rect x="173" y="58" width="3" height="1"/><rect x="172" y="59" width="1" height="2"/><rect x="176" y="59" width="1" height="2"/><rect x="175" y="61" width="1" height="1"/><rect x="174" y="62" width="2" height="2"/><rect x="173" y="63" width="3" height="1"/></g>
<path d="M188 61 H204 M196 53 V69" stroke="#000"/><path d="M188 61 L190.5 58.5 V63.5 Z M204 61 L201.5 58.5 V63.5 Z M196 53 L193.5 55.5 H198.5 Z M196 69 L193.5 66.5 H198.5 Z" fill="#000"/><path d="M199 64 L203.5 68.5" stroke="#000" stroke-width="3"/><path d="M199 64 L203 68" stroke="#0060ff" stroke-width="1.5"/><circle cx="196" cy="61" r="3" fill="#00e8e8" stroke="#c0a0a0" stroke-width="0.6"/><path d="M195 62 L197 60" stroke="#fff" stroke-width="1"/>
<path d="M215 58 L225 67.5" stroke="#000" stroke-width="3.5"/><path d="M215 58 L224.5 67.0" stroke="#00c8ff" stroke-width="1.5"/><circle cx="215" cy="58" r="4.5" fill="#00e8e8" stroke="#000" stroke-width="1"/><circle cx="214" cy="57" r="1.575" fill="#ffffff"/><path d="M212 58 H218 M215 55 V61" stroke="#000080" stroke-width="2"/>
<path d="M237 58 L247 67.5" stroke="#000" stroke-width="3.5"/><path d="M237 58 L246.5 67.0" stroke="#00c8ff" stroke-width="1.5"/><circle cx="237" cy="58" r="4.5" fill="#00e8e8" stroke="#000" stroke-width="1"/><circle cx="236" cy="57" r="1.575" fill="#ffffff"/><path d="M233.5 58 H240.5" stroke="#000080" stroke-width="2"/>
<rect x="254.5" y="53.5" width="12" height="9" fill="none" stroke="#000"/><path d="M263 61.5 L269.5 68" stroke="#000" stroke-width="3.5"/><path d="M263 61.5 L269.0 67.5" stroke="#00c8ff" stroke-width="1.5"/><circle cx="263" cy="61.5" r="3" fill="#00e8e8" stroke="#000" stroke-width="1"/><circle cx="262" cy="60.5" r="1.0499999999999998" fill="#ffffff"/>
<rect x="276.5" y="53.5" width="12" height="9" fill="#fff" stroke="#000"/><path d="M278 57.5 H287 M278 59.5 H284" stroke="#000" stroke-dasharray="1 1"/><path d="M290.5 58 V68.5 H277" fill="none" stroke="#000" stroke-dasharray="1 1"/><path d="M285 61 L291 68" stroke="#000" stroke-width="3.5"/><path d="M285 61 L290.5 67.5" stroke="#00c8ff" stroke-width="1.5"/><circle cx="285" cy="61" r="3" fill="#00e8e8" stroke="#000" stroke-width="1"/><circle cx="284" cy="60" r="1.0499999999999998" fill="#ffffff"/>
<path d="M302.5 53.5 H313.5 V67.5 H303.5 V63.5 H298.5 V58 Q299 54 302.5 53.5 Z" fill="none" stroke="#ff0000"/><path d="M304.5 56.5 H311 V65" fill="none" stroke="#ff0000" stroke-width="0.8"/><path d="M306 61 L312.5 68" stroke="#000" stroke-width="3.5"/><path d="M306 61 L312.0 67.5" stroke="#00c8ff" stroke-width="1.5"/><circle cx="306" cy="61" r="3" fill="#00e8e8" stroke="#000" stroke-width="1"/><circle cx="305" cy="60" r="1.0499999999999998" fill="#ffffff"/>
<path d="M338 61 Q340 56 344 56.5 Q348.5 58 347 63 L345 66" fill="none" stroke="#000" stroke-width="3.2"/><path d="M338 61 Q340 56 344 56.5 Q348.5 58 347 63 L345 66" fill="none" stroke="#00d0d8" stroke-width="2"/><path d="M334 57.5 L335 64.5 L341 63 Z" fill="#00d0d8" stroke="#000" stroke-width="0.8"/>
<path d="M367 61 Q365 56 361 56.5 Q356.5 58 358 63 L360 66" fill="none" stroke="#000" stroke-width="3.2"/><path d="M367 61 Q365 56 361 56.5 Q356.5 58 358 63 L360 66" fill="none" stroke="#00d0d8" stroke-width="2"/><path d="M371 57.5 L370 64.5 L364 63 Z" fill="#00d0d8" stroke="#000" stroke-width="0.8"/>
<g stroke="#000" stroke-width="1" fill="#fff"><path d="M415.5 57.5 L421.5 53.5 V65.5 L415.5 69.5 Z"/><path d="M417.5 58.5 L423.5 54.5 V66.5 L417.5 70.5 Z"/><path d="M420.5 59.5 L426.5 55.5 V67.5 L420.5 71.5 Z"/></g>
<path d="M500.5 81.5 Q502 86 506 87.5 Q511 87 513 83 L508 81 Z" fill="#ffffff"/><path d="M501 83 Q503 87.5 507 87.8 Q510.5 87.5 512 85.5" fill="none" stroke="#e0e0e0" stroke-width="1.4"/><ellipse cx="506.8" cy="82.2" rx="3.3" ry="3.2" fill="#000"/><rect x="504" y="80.5" width="2" height="2" fill="#a0a0a0"/><path d="M500.8 80.8 Q504 78 508 78.5 Q512.5 79 513.2 82 Q513.2 84.5 511.5 85.8" fill="none" stroke="#fff" stroke-width="1.5"/><path d="M507.5 77.3 V78.5 M510.5 78 V79.5 M512.8 79.5 L513.8 80.5" stroke="#fff" stroke-width="1.2"/><rect x="500" y="80.5" width="1.5" height="1.3" fill="#0000c0"/>
<path d="M500.5 97.5 Q502 102 506 103.5 Q511 103 513 99 L508 97 Z" fill="#ffffff"/><path d="M501 99 Q503 103.5 507 103.8 Q510.5 103.5 512 101.5" fill="none" stroke="#a8a8a8" stroke-width="1.4"/><ellipse cx="506.8" cy="98.2" rx="3.3" ry="3.2" fill="#000"/><rect x="504" y="96.5" width="2" height="2" fill="#a0a0a0"/><path d="M500.8 96.8 Q504 94 508 94.5 Q512.5 95 513.2 98 Q513.2 100.5 511.5 101.8" fill="none" stroke="#000" stroke-width="1.5"/><path d="M507.5 93.3 V94.5 M510.5 94 V95.5 M512.8 95.5 L513.8 96.5" stroke="#000" stroke-width="1.2"/><rect x="500" y="96.5" width="1.5" height="1.3" fill="#0000c0"/>
<path d="M500.5 113 Q501.5 110 507 109.5 Q513.5 110 514 115 Q513.5 120.5 507 121 Q501 120.5 500.5 114 Z" fill="#b4b2b4"/><path d="M501.5 115 Q503.5 119 508 118.8 Q510.5 118.5 511.5 116.5" fill="none" stroke="#fff" stroke-width="1.3"/><rect x="501" y="112" width="1.5" height="1.5" fill="#fff"/>
<path d="M500.5 129.5 Q502 134 506 135.5 Q511 135 513 131 L508 129 Z" fill="#ffffff"/><path d="M501 131 Q503 135.5 507 135.8 Q510.5 135.5 512 133.5" fill="none" stroke="#a8a8a8" stroke-width="1.4"/><ellipse cx="506.8" cy="130.2" rx="3.3" ry="3.2" fill="#000"/><rect x="504" y="128.5" width="2" height="2" fill="#a0a0a0"/><path d="M500.8 128.8 Q504 126 508 126.5 Q512.5 127 513.2 130 Q513.2 132.5 511.5 133.8" fill="none" stroke="#000" stroke-width="1.5"/><path d="M507.5 125.3 V126.5 M510.5 126 V127.5 M512.8 127.5 L513.8 128.5" stroke="#000" stroke-width="1.2"/><rect x="500" y="128.5" width="1.5" height="1.3" fill="#0000c0"/>
<path d="M575.5 87.0 Q577 91.5 581 93.0 Q586 92.5 588 88.5 L583 86.5 Z" fill="#ffffff"/><path d="M576 88.5 Q578 93.0 582 93.3 Q585.5 93.0 587 91.0" fill="none" stroke="#a8a8a8" stroke-width="1.4"/><ellipse cx="581.8" cy="87.7" rx="3.3" ry="3.2" fill="#000"/><rect x="579" y="86.0" width="2" height="2" fill="#a0a0a0"/><path d="M575.8 86.3 Q579 83.5 583 84.0 Q587.5 84.5 588.2 87.5 Q588.2 90.0 586.5 91.3" fill="none" stroke="#000" stroke-width="1.5"/><path d="M582.5 82.8 V84.0 M585.5 83.5 V85.0 M587.8 85.0 L588.8 86.0" stroke="#000" stroke-width="1.2"/><rect x="575" y="86.0" width="1.5" height="1.3" fill="#0000c0"/>
<path d="M575.5 108 Q576.5 105 582 104.5 Q588.5 105 589 110 Q588.5 115.5 582 116 Q576 115.5 575.5 109 Z" fill="#b4b2b4"/><path d="M576.5 110 Q578.5 114 583 113.8 Q585.5 113.5 586.5 111.5" fill="none" stroke="#fff" stroke-width="1.3"/><rect x="576" y="107" width="1.5" height="1.5" fill="#fff"/>
<rect x="578" y="131" width="8" height="2" fill="#0000ff"/><rect x="581" y="128" width="2" height="8" fill="#0000ff"/>
<rect x="579" y="153" width="7" height="2" fill="#0000ff"/>
<g shape-rendering="auto"><path d="M576 195 L583 192 L589.5 195.5 L588 200 L584.5 205.5 L579 205 L576.5 200 Z" fill="#b8b6b8"/><path d="M578 196 L583 194 L588 196 L584 198 Z" fill="#d8d8d8"/><path d="M577.5 193.5 L582 196" stroke="#000" stroke-width="1.6"/><path d="M584.5 198.5 L589.5 195 L588 200.5 L584.5 205.5 L583 204 Z" fill="#1a1a1a"/><circle cx="580.8" cy="200.3" r="2.4" fill="none" stroke="#98dc98" stroke-width="1.4"/><rect x="579.5" y="199" width="1" height="2" fill="#000"/><rect x="581" y="201.5" width="2" height="1" fill="#000"/><rect x="577" y="195" width="1.5" height="1.5" fill="#fff"/><rect x="583.5" y="197" width="1.5" height="1" fill="#fff"/></g>
<path d="M575 174h1v1h-1zM576 174h1v1h-1zM577 174h1v1h-1zM575 175h1v1h-1zM578 175h1v1h-1zM575 176h1v1h-1zM576 176h1v1h-1zM577 176h1v1h-1zM575 177h1v1h-1zM577 177h1v1h-1zM575 178h1v1h-1zM578 178h1v1h-1zM580 174h1v1h-1zM581 174h1v1h-1zM582 174h1v1h-1zM583 174h1v1h-1zM580 175h1v1h-1zM580 176h1v1h-1zM581 176h1v1h-1zM582 176h1v1h-1zM580 177h1v1h-1zM580 178h1v1h-1zM581 178h1v1h-1zM582 178h1v1h-1zM583 178h1v1h-1zM585 174h1v1h-1zM588 174h1v1h-1zM585 175h1v1h-1zM586 175h1v1h-1zM588 175h1v1h-1zM585 176h1v1h-1zM587 176h1v1h-1zM588 176h1v1h-1zM585 177h1v1h-1zM588 177h1v1h-1zM585 178h1v1h-1zM588 178h1v1h-1z" fill="#000" shape-rendering="crispEdges"/>
</svg>
<div class="t" style="left:215px;top:6px;font-size:11px;font-weight:bold;color:#c4c0c0;letter-spacing:0.75px">QCad &#8211; /home/andre/chat.dxf</div>
<div class="t m" style="left:12px">File</div><div class="u" style="left:12px;top:40px;width:8px"></div>
<div class="t m" style="left:53px">Edit</div><div class="u" style="left:53px;top:40px;width:8px"></div>
<div class="t m" style="left:95px">Zoom</div><div class="u" style="left:95px;top:40px;width:8px"></div>
<div class="t m" style="left:147px">Documents</div><div class="u" style="left:147px;top:40px;width:9px"></div>
<div class="t m" style="left:229px">Help</div><div class="u" style="left:229px;top:40px;width:9px"></div>
<div class="t" style="left:21px;top:601px;font-size:26px;line-height:26px;font-weight:bold;color:#ff0000">TERMINE</div>
<div class="t" style="left:223px;top:594px">L: (Un&#8722;)tag</div>
<div class="t" style="left:246px;top:609px">element</div>
<div class="t" style="left:312px;top:594px">R: Back</div>
<div class="t" style="left:403px;top:594px;letter-spacing:0.2px">(Un&#8722;)tag single elements</div>
<div class="t" style="left:459px;top:573px;letter-spacing:0.6px">10.00</div>
<div class="t" style="left:516px;top:79px;color:#fff;width:52px;overflow:hidden">Foramt A4</div>
<div class="t" style="left:516px;top:95px">Trait</div>
<div class="t" style="left:516px;top:111px">cotation</div>
<div class="t" style="left:516px;top:127px">coupe</div>
<div class="t" style="left:500px;top:56px;font-size:12px;letter-spacing:0">2</div>

<svg width="602" height="647" viewBox="0 0 602 647" style="pointer-events:none" shape-rendering="crispEdges">
<rect x="293" y="606" width="17" height="16" fill="#fff"/>
<rect x="294" y="622" width="15" height="4" fill="#fff"/><rect x="296" y="626" width="11" height="3" fill="#fff"/>
<path d="M294 614h1v1h-1zM294 617h1v1h-1zM296 616h1v1h-1zM295 620h1v1h-1zM297 619h1v1h-1zM296 623h1v1h-1zM298 622h1v1h-1zM300 625h1v1h-1zM298 626h1v1h-1zM302 627h1v1h-1zM299 621h1v1h-1z" fill="#909090"/>
<g fill="#000">
<rect x="293" y="605" width="17" height="1"/>
<rect x="292" y="606" width="1" height="16"/><rect x="310" y="606" width="1" height="16"/>
<rect x="293" y="612" width="17" height="1"/>
<rect x="298" y="606" width="1" height="6"/><rect x="304" y="606" width="1" height="6"/>
<rect x="293" y="622" width="1" height="3"/><rect x="309" y="622" width="1" height="3"/>
<rect x="294" y="625" width="1" height="2"/><rect x="308" y="625" width="1" height="2"/>
<rect x="295" y="627" width="2" height="1"/><rect x="306" y="627" width="2" height="1"/>
<rect x="297" y="628" width="9" height="1"/>
<rect x="300" y="600" width="1" height="5"/><rect x="302" y="600" width="1" height="5"/>
<rect x="299" y="598" width="1" height="2"/><rect x="301" y="599" width="1" height="1"/><rect x="298" y="598" width="1" height="1"/>
</g></svg>
</body></html>
